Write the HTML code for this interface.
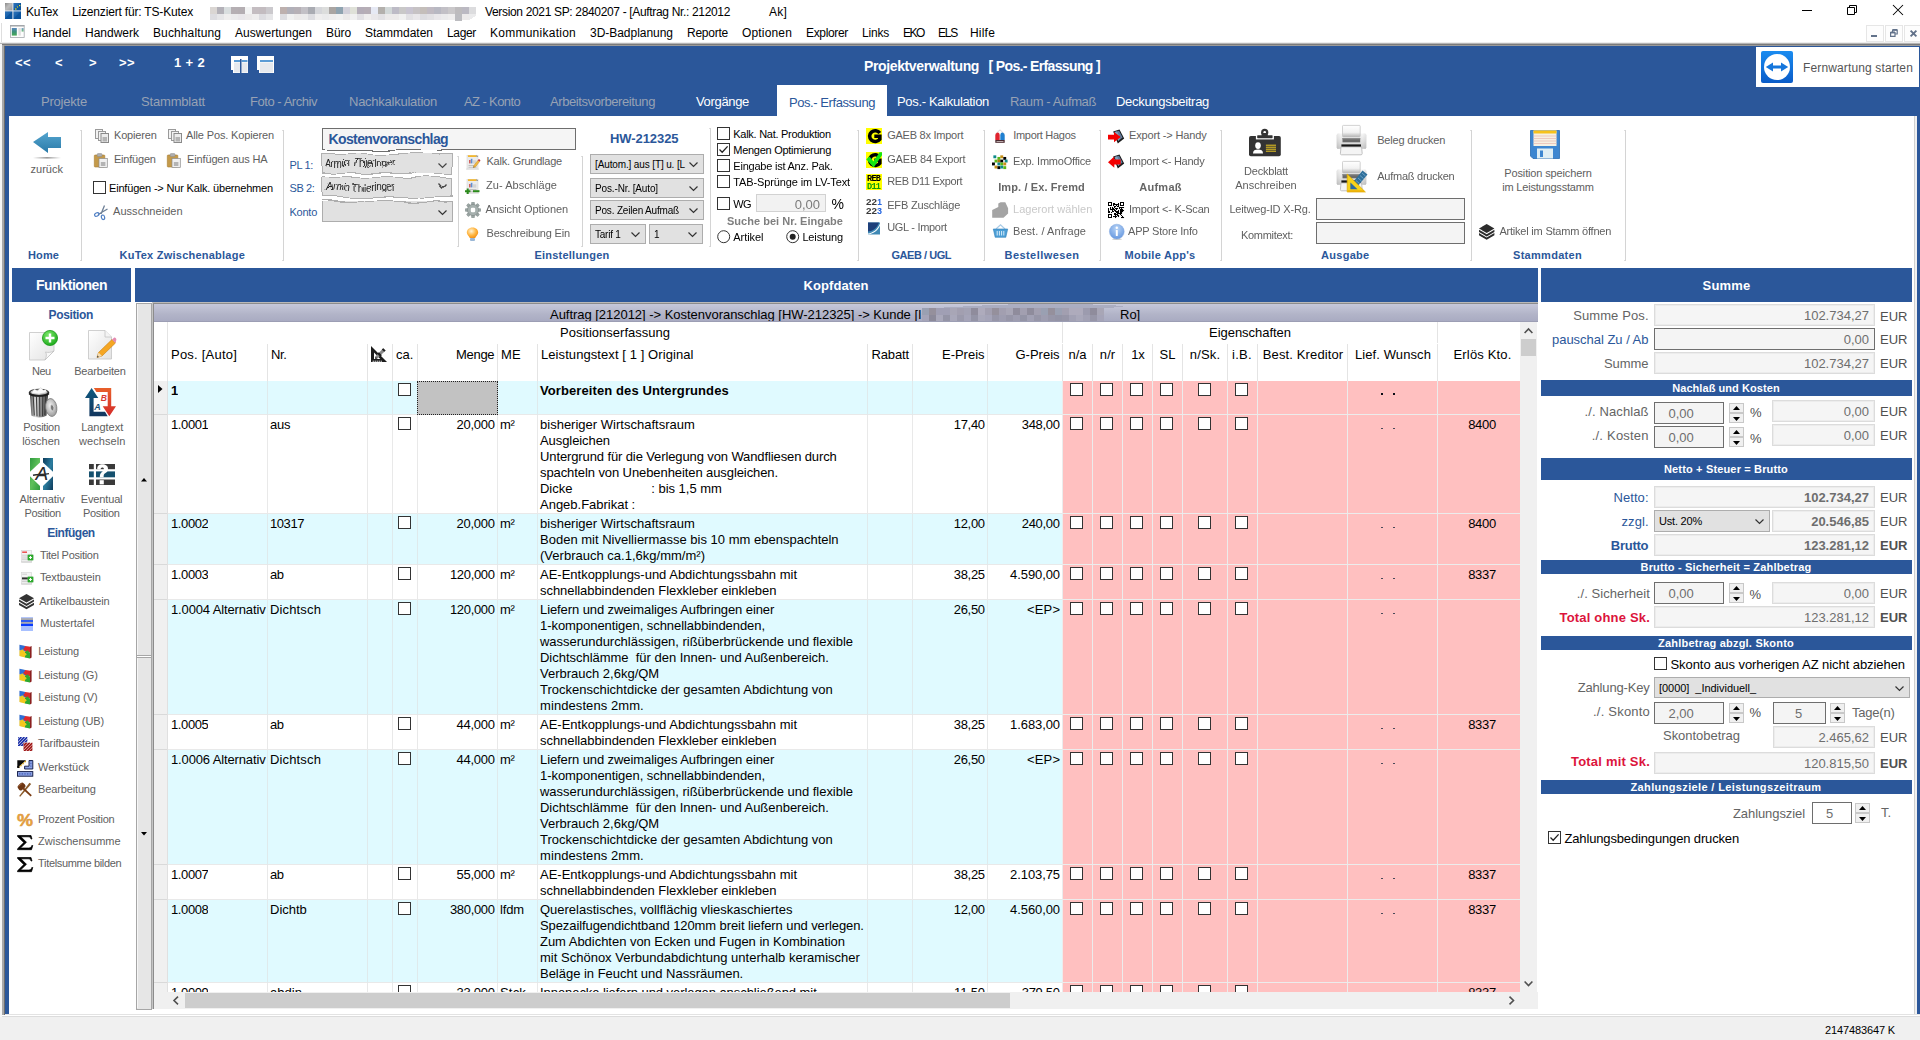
<!DOCTYPE html>
<html><head><meta charset="utf-8"><title>KuTex</title><style>
html,body{margin:0;padding:0;}
body{width:1920px;height:1040px;position:relative;overflow:hidden;background:#fff;
 font-family:"Liberation Sans",sans-serif;}
.t{position:absolute;white-space:nowrap;}
.b{position:absolute;}
svg{overflow:visible}
</style></head><body>
<div class="b" style="left:0px;top:0px;width:1920px;height:1040px;background:#fff;"></div>
<div class="b" style="left:0px;top:1017px;width:1920px;height:23px;background:#f0f0f0;"></div>
<div class="b" style="left:0px;top:1014px;width:1920px;height:1px;background:#e3e3e3;"></div>
<div class="b" style="left:0px;top:1016px;width:1920px;height:1px;background:#dcdcdc;"></div>
<div class="t" style="top:1022.5px;height:15px;line-height:15px;font-size:11px;color:#000;letter-spacing:-0.131px;left:1825px;">2147483647 K</div>
<div class="b" style="left:0px;top:44px;width:2px;height:973px;background:#f6f6f6;"></div>
<div class="b" style="left:2px;top:44px;width:2px;height:971px;background:#a9a9a9;"></div>
<div class="b" style="left:4px;top:44px;width:1px;height:971px;background:#6d6d6d;"></div>
<div class="b" style="left:0px;top:42px;width:1920px;height:1px;background:#ededed;"></div>
<div class="b" style="left:0px;top:43px;width:1920px;height:1px;background:#b4b4b4;"></div>
<div class="b" style="left:2px;top:44px;width:1918px;height:1px;background:#7a7a7a;"></div>
<div class="b" style="left:4px;top:45px;width:1916px;height:1px;background:#9a9a9a;"></div>
<div class="b" style="left:5px;top:46px;width:1915px;height:70px;background:#2b579a;"></div>
<div class="b" style="left:5px;top:116px;width:4px;height:898px;background:#2b579a;"></div>
<div class="b" style="left:1917px;top:116px;width:3px;height:898px;background:#2b579a;"></div>
<div class="b" style="left:1914px;top:116px;width:1px;height:898px;background:#d0d0d0;"></div>
<div class="b" style="left:1915px;top:116px;width:2px;height:898px;background:#f0f0f0;"></div>
<svg class="b" style="left:5px;top:3px" width="16" height="16" viewBox="0 0 16 16"><defs><linearGradient id="ai1" x1="0" y1="0" x2="1" y2="1"><stop offset="0" stop-color="#8a8a8a"/><stop offset="0.45" stop-color="#bcbcbc"/><stop offset="1" stop-color="#9a9a9a"/></linearGradient><linearGradient id="ai2" x1="0" y1="0" x2="1" y2="1"><stop offset="0" stop-color="#2f74b8"/><stop offset="0.45" stop-color="#1a62ac"/><stop offset="0.5" stop-color="#0a55a0"/><stop offset="1" stop-color="#0a4f98"/></linearGradient></defs><rect x="0" y="0" width="16" height="16" fill="#dfe6ee"/><rect x="0" y="0" width="7.4" height="7.4" fill="url(#ai1)"/><rect x="8.4" y="0" width="7.6" height="7.4" fill="url(#ai2)"/><rect x="0" y="8.4" width="7.4" height="7.6" fill="url(#ai2)"/><rect x="8.4" y="8.4" width="7.6" height="7.6" fill="url(#ai2)"/><rect x="14" y="1.9" width="1.3" height="1.3" fill="#f4e61e"/><rect x="11.9" y="3.4" width="1.2" height="1.2" fill="#d8d428"/><rect x="10.2" y="5.2" width="1.2" height="1.6" fill="#e6de1e"/></svg>
<div class="t" style="top:3.5px;height:16px;line-height:16px;font-size:12px;color:#000;letter-spacing:-0.270px;left:26px;">KuTex</div>
<div class="t" style="top:3.5px;height:16px;line-height:16px;font-size:12px;color:#000;letter-spacing:-0.174px;left:72px;">Lizenziert für: TS-Kutex</div>
<svg class="b" style="left:0;top:0" width="480" height="22" shape-rendering="crispEdges"><rect x="210" y="7" width="7" height="7" fill="#dad6d3"/><rect x="210" y="14" width="7" height="6" fill="#dddde1"/><rect x="217" y="7" width="7" height="7" fill="#b3b1b8"/><rect x="217" y="14" width="7" height="6" fill="#e6e6e8"/><rect x="224" y="7" width="7" height="7" fill="#d9dedf"/><rect x="224" y="14" width="7" height="6" fill="#efeeee"/><rect x="231" y="7" width="7" height="7" fill="#b5afb3"/><rect x="231" y="14" width="7" height="6" fill="#ebebec"/><rect x="238" y="7" width="7" height="7" fill="#b4aeb2"/><rect x="238" y="14" width="7" height="6" fill="#e9e7ea"/><rect x="245" y="7" width="7" height="7" fill="#f3f4f4"/><rect x="245" y="14" width="7" height="6" fill="#eceaea"/><rect x="252" y="7" width="7" height="7" fill="#c4bdc1"/><rect x="252" y="14" width="7" height="6" fill="#efeeee"/><rect x="259" y="7" width="7" height="7" fill="#c3bcc0"/><rect x="259" y="14" width="7" height="6" fill="#dddde1"/><rect x="266" y="7" width="7" height="7" fill="#cbc9cd"/><rect x="266" y="14" width="7" height="6" fill="#e6e6e8"/><rect x="280" y="7" width="7" height="7" fill="#bdb0ae"/><rect x="280" y="14" width="7" height="6" fill="#dddde1"/><rect x="287" y="7" width="7" height="7" fill="#b1b0b9"/><rect x="287" y="14" width="7" height="6" fill="#f1f1f1"/><rect x="294" y="7" width="7" height="7" fill="#b6b0b6"/><rect x="294" y="14" width="7" height="6" fill="#eceaea"/><rect x="301" y="7" width="7" height="7" fill="#c2c0c6"/><rect x="301" y="14" width="7" height="6" fill="#ebebec"/><rect x="308" y="7" width="7" height="7" fill="#a9abb2"/><rect x="308" y="14" width="7" height="6" fill="#dddde1"/><rect x="315" y="7" width="7" height="7" fill="#d5d6da"/><rect x="315" y="14" width="7" height="6" fill="#efeeee"/><rect x="322" y="7" width="7" height="7" fill="#dcdddc"/><rect x="322" y="14" width="7" height="6" fill="#ebebec"/><rect x="329" y="7" width="7" height="7" fill="#aaa5a2"/><rect x="329" y="14" width="7" height="6" fill="#efeeee"/><rect x="336" y="7" width="7" height="7" fill="#8fa3b0"/><rect x="336" y="14" width="7" height="6" fill="#f1f1f1"/><rect x="343" y="7" width="7" height="7" fill="#d3d1da"/><rect x="343" y="14" width="7" height="6" fill="#eceaea"/><rect x="350" y="7" width="7" height="7" fill="#dfe1d8"/><rect x="350" y="14" width="7" height="6" fill="#f1f1f1"/><rect x="357" y="7" width="7" height="7" fill="#b4adb8"/><rect x="357" y="14" width="7" height="6" fill="#e2e1e4"/><rect x="364" y="7" width="7" height="7" fill="#b6aeb6"/><rect x="364" y="14" width="7" height="6" fill="#efeeee"/><rect x="371" y="7" width="7" height="7" fill="#e6e9f4"/><rect x="371" y="14" width="7" height="6" fill="#e9e7ea"/><rect x="378" y="7" width="7" height="7" fill="#b3b0ac"/><rect x="378" y="14" width="7" height="6" fill="#e2e1e4"/><rect x="385" y="7" width="7" height="7" fill="#d2d8d8"/><rect x="385" y="14" width="7" height="6" fill="#eceaea"/><rect x="392" y="7" width="7" height="7" fill="#bdbbc6"/><rect x="392" y="14" width="7" height="6" fill="#eceaea"/><rect x="399" y="7" width="7" height="7" fill="#c9c8c8"/><rect x="399" y="14" width="7" height="6" fill="#f1f1f1"/><rect x="406" y="7" width="7" height="7" fill="#c8c4d0"/><rect x="406" y="14" width="7" height="6" fill="#e2e1e4"/><rect x="413" y="7" width="7" height="7" fill="#c6c2c4"/><rect x="413" y="14" width="7" height="6" fill="#e9e7ea"/><rect x="420" y="7" width="7" height="7" fill="#c4beba"/><rect x="420" y="14" width="7" height="6" fill="#dddde1"/><rect x="427" y="7" width="7" height="7" fill="#c0bac2"/><rect x="427" y="14" width="7" height="6" fill="#e2e1e4"/><rect x="434" y="7" width="7" height="7" fill="#b8b8c2"/><rect x="434" y="14" width="7" height="6" fill="#e9e7ea"/><rect x="441" y="7" width="7" height="7" fill="#c2c0c6"/><rect x="441" y="14" width="7" height="6" fill="#ebebec"/><rect x="448" y="7" width="7" height="7" fill="#cac8ca"/><rect x="448" y="14" width="7" height="6" fill="#efeeee"/><rect x="455" y="7" width="7" height="7" fill="#bdbbbd"/><rect x="455" y="14" width="7" height="6" fill="#ebebec"/><rect x="462" y="7" width="7" height="7" fill="#bbb9c2"/><rect x="462" y="14" width="7" height="6" fill="#eceaea"/><rect x="469" y="7" width="7" height="7" fill="#dcdcde"/><rect x="469" y="14" width="7" height="6" fill="#ebebec"/><rect x="455" y="14" width="7" height="7" fill="#bcbcc0"/><path d="M469 20 L476 16 V21 H469 Z" fill="#fff"/></svg>
<div class="t" style="top:3.5px;height:16px;line-height:16px;font-size:12px;color:#000;letter-spacing:-0.337px;left:485px;">Version 2021 SP: 2840207 - [Auftrag Nr.: 212012</div>
<div class="t" style="top:3.5px;height:16px;line-height:16px;font-size:12px;color:#000;letter-spacing:0.221px;left:769px;">Ak]</div>
<svg class="b" style="left:1802px;top:10px" width="10" height="1" viewBox="0 0 10 1"><rect width="10" height="1" fill="#000"/></svg>
<svg class="b" style="left:1847px;top:5px" width="10" height="10" viewBox="0 0 10 10"><path d="M0.5 2.5 H7.5 V9.5 H0.5 Z M2.5 2.5 V0.5 H9.5 V7.5 H7.5" fill="none" stroke="#000" stroke-width="1"/></svg>
<svg class="b" style="left:1893px;top:5px" width="10" height="10" viewBox="0 0 10 10"><path d="M0 0 L10 10 M10 0 L0 10" stroke="#000" stroke-width="1.05"/></svg>
<div class="b" style="left:0px;top:22px;width:1920px;height:20px;background:#fff;"></div>
<svg class="b" style="left:10.3px;top:25.2px" width="14.6" height="12.8" viewBox="0 0 14.6 12.8"><defs><linearGradient id="mi1" x1="0" y1="0" x2="0" y2="1"><stop offset="0" stop-color="#5a86c0"/><stop offset="0.5" stop-color="#3a9078"/><stop offset="1" stop-color="#48aa58"/></linearGradient></defs><rect x="0.4" y="0.4" width="13.8" height="12" fill="#fdfdfd" stroke="#a4a8ac" stroke-width="0.8"/><rect x="0.4" y="0.2" width="13.8" height="1.3" fill="#9ea2a6"/><rect x="1.8" y="3" width="5" height="7.6" fill="url(#mi1)"/><rect x="8.4" y="3" width="2.4" height="7.6" fill="#dedede"/><rect x="11.6" y="3" width="2" height="3.6" fill="url(#mi1)" opacity="0.75"/></svg>
<div class="b" style="left:1px;top:23px;width:1px;height:19px;background:#dedede;"></div>
<div class="t" style="top:25.0px;height:16px;line-height:16px;font-size:12px;color:#000;letter-spacing:-0.005px;left:33px;">Handel</div>
<div class="t" style="top:25.0px;height:16px;line-height:16px;font-size:12px;color:#000;letter-spacing:-0.003px;left:85px;">Handwerk</div>
<div class="t" style="top:25.0px;height:16px;line-height:16px;font-size:12px;color:#000;letter-spacing:0.116px;left:153px;">Buchhaltung</div>
<div class="t" style="top:25.0px;height:16px;line-height:16px;font-size:12px;color:#000;letter-spacing:0.023px;left:235px;">Auswertungen</div>
<div class="t" style="top:25.0px;height:16px;line-height:16px;font-size:12px;color:#000;letter-spacing:-0.087px;left:326px;">Büro</div>
<div class="t" style="top:25.0px;height:16px;line-height:16px;font-size:12px;color:#000;letter-spacing:-0.004px;left:365px;">Stammdaten</div>
<div class="t" style="top:25.0px;height:16px;line-height:16px;font-size:12px;color:#000;letter-spacing:-0.339px;left:447px;">Lager</div>
<div class="t" style="top:25.0px;height:16px;line-height:16px;font-size:12px;color:#000;letter-spacing:0.253px;left:490px;">Kommunikation</div>
<div class="t" style="top:25.0px;height:16px;line-height:16px;font-size:12px;color:#000;letter-spacing:-0.031px;left:590px;">3D-Badplanung</div>
<div class="t" style="top:25.0px;height:16px;line-height:16px;font-size:12px;color:#000;letter-spacing:-0.242px;left:687px;">Reporte</div>
<div class="t" style="top:25.0px;height:16px;line-height:16px;font-size:12px;color:#000;letter-spacing:0.162px;left:742px;">Optionen</div>
<div class="t" style="top:25.0px;height:16px;line-height:16px;font-size:12px;color:#000;letter-spacing:-0.336px;left:806px;">Explorer</div>
<div class="t" style="top:25.0px;height:16px;line-height:16px;font-size:12px;color:#000;letter-spacing:-0.203px;left:862px;">Links</div>
<div class="t" style="top:25.0px;height:16px;line-height:16px;font-size:12px;color:#000;letter-spacing:-1.448px;left:903px;">EKO</div>
<div class="t" style="top:25.0px;height:16px;line-height:16px;font-size:12px;color:#000;letter-spacing:-1.228px;left:938px;">ELS</div>
<div class="t" style="top:25.0px;height:16px;line-height:16px;font-size:12px;color:#000;letter-spacing:0.199px;left:970px;">Hilfe</div>
<div class="b" style="left:1866px;top:24.5px;width:17.5px;height:17.5px;background:#fdfdfd;border:1px solid #e6e6e6;box-sizing:border-box;"></div>
<div class="b" style="left:1885px;top:24.5px;width:17.5px;height:17.5px;background:#fdfdfd;border:1px solid #e6e6e6;box-sizing:border-box;"></div>
<div class="b" style="left:1904px;top:24.5px;width:17.5px;height:17.5px;background:#fdfdfd;border:1px solid #e6e6e6;box-sizing:border-box;"></div>
<svg class="b" style="left:1871px;top:35px" width="6" height="2" viewBox="0 0 6 2"><rect width="6" height="2" fill="#62728a"/></svg>
<svg class="b" style="left:1890px;top:29px" width="8" height="8" viewBox="0 0 8 8"><path d="M0.6 3.6 H5 V7.4 H0.6 Z M2.6 3 V1 H7.2 V5 H5.4" fill="none" stroke="#62728a" stroke-width="1.2"/><path d="M0.6 3.3 H5 M2.6 0.9 H7.2" stroke="#62728a" stroke-width="1.7"/></svg>
<svg class="b" style="left:1909.5px;top:30px" width="7" height="7" viewBox="0 0 7 7"><path d="M0.6 0.6 L6.4 6.4 M6.4 0.6 L0.6 6.4" stroke="#62728a" stroke-width="1.9"/></svg>
<div class="t" style="top:53.5px;height:17px;line-height:17px;font-size:13px;color:#fff;font-weight:bold;letter-spacing:0.408px;left:15px;">&lt;&lt;</div>
<div class="t" style="top:53.5px;height:17px;line-height:17px;font-size:13px;color:#fff;font-weight:bold;letter-spacing:0.408px;left:55px;">&lt;</div>
<div class="t" style="top:53.5px;height:17px;line-height:17px;font-size:13px;color:#fff;font-weight:bold;letter-spacing:0.408px;left:89px;">&gt;</div>
<div class="t" style="top:53.5px;height:17px;line-height:17px;font-size:13px;color:#fff;font-weight:bold;letter-spacing:0.408px;left:119px;">&gt;&gt;</div>
<div class="t" style="top:53.5px;height:17px;line-height:17px;font-size:13px;color:#fff;font-weight:bold;letter-spacing:0.345px;left:174px;">1 + 2</div>
<svg class="b" style="left:231px;top:56px" width="17" height="17" viewBox="0 0 17 17"><rect x="0" y="0" width="17" height="14" fill="#fff"/><rect x="2" y="3" width="15" height="14" fill="#fff"/><rect x="3" y="4" width="6" height="2" fill="#5b9bd5"/><rect x="10.5" y="4" width="6" height="2" fill="#5b9bd5"/><rect x="3" y="6.5" width="6" height="10" fill="#e6e9ee"/><rect x="10.5" y="6.5" width="6" height="10" fill="#e6e9ee"/><rect x="9" y="3" width="1.5" height="14" fill="#2b579a"/></svg>
<svg class="b" style="left:257px;top:56px" width="17" height="17" viewBox="0 0 17 17"><rect x="0" y="0" width="17" height="14" fill="#fff"/><rect x="2" y="3" width="15" height="14" fill="#fff"/><rect x="3" y="4" width="13" height="2" fill="#5b9bd5"/><rect x="3" y="6.5" width="13" height="10" fill="#e6e9ee"/></svg>
<div class="t" style="top:57.0px;height:18px;line-height:18px;font-size:14px;color:#fff;font-weight:bold;letter-spacing:-0.375px;left:864px;">Projektverwaltung</div>
<div class="t" style="top:57.0px;height:18px;line-height:18px;font-size:14px;color:#fff;font-weight:bold;letter-spacing:-0.641px;left:988.5px;">[ Pos.- Erfassung ]</div>
<div class="b" style="left:1756px;top:47px;width:163px;height:40px;background:#fff;"></div>
<svg class="b" style="left:1761px;top:51px" width="32" height="32" viewBox="0 0 32 32"><defs><linearGradient id="tv" x1="0" y1="0" x2="0" y2="1"><stop offset="0" stop-color="#1a8cf0"/><stop offset="1" stop-color="#0a5cc8"/></linearGradient></defs><rect width="32" height="32" rx="2" fill="url(#tv)"/><circle cx="16" cy="16" r="13" fill="#fff"/><path d="M4.8 16 L12 11.5 V14.6 H20 V11.5 L27.2 16 L20 20.5 V17.4 H12 V20.5 Z" fill="#1576dc"/></svg>
<div class="t" style="top:60.0px;height:16px;line-height:16px;font-size:12px;color:#555;letter-spacing:0.137px;left:1803px;">Fernwartung starten</div>
<div class="t" style="top:93.0px;height:17px;line-height:17px;font-size:13px;color:#97a2b4;letter-spacing:-0.211px;left:41px;">Projekte</div>
<div class="t" style="top:93.0px;height:17px;line-height:17px;font-size:13px;color:#97a2b4;letter-spacing:-0.174px;left:141px;">Stammblatt</div>
<div class="t" style="top:93.0px;height:17px;line-height:17px;font-size:13px;color:#97a2b4;letter-spacing:-0.459px;left:250px;">Foto - Archiv</div>
<div class="t" style="top:93.0px;height:17px;line-height:17px;font-size:13px;color:#97a2b4;letter-spacing:-0.252px;left:349px;">Nachkalkulation</div>
<div class="t" style="top:93.0px;height:17px;line-height:17px;font-size:13px;color:#97a2b4;letter-spacing:-0.614px;left:464px;">AZ - Konto</div>
<div class="t" style="top:93.0px;height:17px;line-height:17px;font-size:13px;color:#97a2b4;letter-spacing:-0.407px;left:550px;">Arbeitsvorbereitung</div>
<div class="t" style="top:93.0px;height:17px;line-height:17px;font-size:13px;color:#fff;letter-spacing:-0.333px;left:696px;">Vorgänge</div>
<div class="b" style="left:777px;top:85px;width:110px;height:31px;background:#fff;"></div>
<div class="t" style="top:93.5px;height:17px;line-height:17px;font-size:13px;color:#2b579a;letter-spacing:-0.433px;left:789px;">Pos.- Erfassung</div>
<div class="t" style="top:93.0px;height:17px;line-height:17px;font-size:13px;color:#fff;letter-spacing:-0.327px;left:897px;">Pos.- Kalkulation</div>
<div class="t" style="top:93.0px;height:17px;line-height:17px;font-size:13px;color:#97a2b4;letter-spacing:-0.387px;left:1010px;">Raum - Aufmaß</div>
<div class="t" style="top:93.0px;height:17px;line-height:17px;font-size:13px;color:#fff;letter-spacing:-0.304px;left:1116px;">Deckungsbeitrag</div>
<div class="b" style="left:9px;top:116px;width:1905px;height:152px;background:#fff;"></div>
<div class="b" style="left:81px;top:130px;width:1px;height:131px;background:#d4d4d4;"></div>
<div class="b" style="left:80px;top:130px;width:1px;height:1px;background:#dedede;"></div>
<div class="b" style="left:80px;top:260px;width:1px;height:1px;background:#dedede;"></div>
<div class="b" style="left:283px;top:130px;width:1px;height:131px;background:#d4d4d4;"></div>
<div class="b" style="left:282px;top:130px;width:1px;height:1px;background:#dedede;"></div>
<div class="b" style="left:282px;top:260px;width:1px;height:1px;background:#dedede;"></div>
<div class="b" style="left:858px;top:130px;width:1px;height:131px;background:#d4d4d4;"></div>
<div class="b" style="left:857px;top:130px;width:1px;height:1px;background:#dedede;"></div>
<div class="b" style="left:857px;top:260px;width:1px;height:1px;background:#dedede;"></div>
<div class="b" style="left:984px;top:130px;width:1px;height:131px;background:#d4d4d4;"></div>
<div class="b" style="left:983px;top:130px;width:1px;height:1px;background:#dedede;"></div>
<div class="b" style="left:983px;top:260px;width:1px;height:1px;background:#dedede;"></div>
<div class="b" style="left:1100px;top:130px;width:1px;height:131px;background:#d4d4d4;"></div>
<div class="b" style="left:1099px;top:130px;width:1px;height:1px;background:#dedede;"></div>
<div class="b" style="left:1099px;top:260px;width:1px;height:1px;background:#dedede;"></div>
<div class="b" style="left:1221px;top:130px;width:1px;height:131px;background:#d4d4d4;"></div>
<div class="b" style="left:1220px;top:130px;width:1px;height:1px;background:#dedede;"></div>
<div class="b" style="left:1220px;top:260px;width:1px;height:1px;background:#dedede;"></div>
<div class="b" style="left:1471px;top:130px;width:1px;height:131px;background:#d4d4d4;"></div>
<div class="b" style="left:1470px;top:130px;width:1px;height:1px;background:#dedede;"></div>
<div class="b" style="left:1470px;top:260px;width:1px;height:1px;background:#dedede;"></div>
<div class="b" style="left:1625px;top:130px;width:1px;height:131px;background:#d4d4d4;"></div>
<div class="b" style="left:1624px;top:130px;width:1px;height:1px;background:#dedede;"></div>
<div class="b" style="left:1624px;top:260px;width:1px;height:1px;background:#dedede;"></div>
<div class="b" style="left:458px;top:156px;width:1px;height:91px;background:#d4d4d4;"></div>
<div class="b" style="left:457px;top:156px;width:1px;height:1px;background:#dedede;"></div>
<div class="b" style="left:457px;top:246px;width:1px;height:1px;background:#dedede;"></div>
<div class="b" style="left:582px;top:156px;width:1px;height:91px;background:#d4d4d4;"></div>
<div class="b" style="left:581px;top:156px;width:1px;height:1px;background:#dedede;"></div>
<div class="b" style="left:581px;top:246px;width:1px;height:1px;background:#dedede;"></div>
<div class="b" style="left:710px;top:128px;width:1px;height:119px;background:#d4d4d4;"></div>
<div class="b" style="left:709px;top:128px;width:1px;height:1px;background:#dedede;"></div>
<div class="b" style="left:709px;top:246px;width:1px;height:1px;background:#dedede;"></div>
<div class="t" style="top:247.8px;height:15px;line-height:15px;font-size:11px;color:#2b579a;font-weight:bold;letter-spacing:0.110px;left:28px;">Home</div>
<div class="t" style="top:247.8px;height:15px;line-height:15px;font-size:11px;color:#2b579a;font-weight:bold;letter-spacing:0.233px;left:119.5px;">KuTex Zwischenablage</div>
<div class="t" style="top:247.8px;height:15px;line-height:15px;font-size:11px;color:#2b579a;font-weight:bold;letter-spacing:0.222px;left:534.5px;">Einstellungen</div>
<div class="t" style="top:247.8px;height:15px;line-height:15px;font-size:11px;color:#2b579a;font-weight:bold;letter-spacing:-0.467px;left:891.5px;">GAEB / UGL</div>
<div class="t" style="top:247.8px;height:15px;line-height:15px;font-size:11px;color:#2b579a;font-weight:bold;letter-spacing:0.441px;left:1004.5px;">Bestellwesen</div>
<div class="t" style="top:247.8px;height:15px;line-height:15px;font-size:11px;color:#2b579a;font-weight:bold;letter-spacing:0.284px;left:1124.5px;">Mobile App&#x27;s</div>
<div class="t" style="top:247.8px;height:15px;line-height:15px;font-size:11px;color:#2b579a;font-weight:bold;letter-spacing:0.292px;left:1321px;">Ausgabe</div>
<div class="t" style="top:247.8px;height:15px;line-height:15px;font-size:11px;color:#2b579a;font-weight:bold;letter-spacing:0.298px;left:1513px;">Stammdaten</div>
<svg class="b" style="left:33px;top:132px" width="28" height="27" viewBox="0 0 28 27"><defs><linearGradient id="ar" x1="0" y1="0" x2="0" y2="1"><stop offset="0" stop-color="#55a5cf"/><stop offset="1" stop-color="#2a7aa8"/></linearGradient><linearGradient id="sh" x1="0" y1="0" x2="1" y2="0"><stop offset="0" stop-color="#fff"/><stop offset="0.5" stop-color="#9a9a9a"/><stop offset="1" stop-color="#fff"/></linearGradient></defs><path d="M0 10 L15 0 V5 H28 V16 H15 V21 Z" fill="url(#ar)"/><rect x="0" y="25" width="28" height="1.6" fill="url(#sh)"/></svg>
<div class="t" style="top:161.8px;height:15px;line-height:15px;font-size:11px;color:#606060;letter-spacing:0.017px;left:30.5px;">zurück</div>
<svg class="b" style="left:95px;top:129px" width="14" height="14" viewBox="0 0 14 14"><rect x="0.5" y="0.5" width="7" height="9" fill="#f2f2f2" stroke="#9a9a9a"/><rect x="3.5" y="2.5" width="7" height="9" fill="#f2f2f2" stroke="#9a9a9a"/><rect x="6" y="4.5" width="7.5" height="9" fill="#ececec" stroke="#8a8a8a"/><rect x="7.5" y="8" width="4.5" height="4.5" fill="#b4b4b4"/></svg>
<div class="t" style="top:127.7px;height:15px;line-height:15px;font-size:11px;color:#606060;letter-spacing:-0.167px;left:114px;">Kopieren</div>
<svg class="b" style="left:168px;top:129px" width="14" height="14" viewBox="0 0 14 14"><rect x="0.5" y="0.5" width="7" height="9" fill="#f2f2f2" stroke="#9a9a9a"/><rect x="3.5" y="2.5" width="7" height="9" fill="#f2f2f2" stroke="#9a9a9a"/><rect x="6" y="4.5" width="7.5" height="9" fill="#ececec" stroke="#8a8a8a"/><rect x="7.5" y="8" width="4.5" height="4.5" fill="#b4b4b4"/></svg>
<div class="t" style="top:127.7px;height:15px;line-height:15px;font-size:11px;color:#606060;letter-spacing:-0.139px;left:186px;">Alle Pos. Kopieren</div>
<svg class="b" style="left:94px;top:153px" width="14" height="15" viewBox="0 0 14 15"><rect x="0.3" y="2" width="10.5" height="12" rx="0.8" fill="#c49a4a" stroke="#a87c30" stroke-width="0.6"/><rect x="3.2" y="0.6" width="4.8" height="3" rx="0.8" fill="#b0b0b0" stroke="#8a8a8a" stroke-width="0.5"/><rect x="5" y="5.5" width="8.3" height="9" fill="#f0f0f0" stroke="#8a8a8a" stroke-width="0.7"/><rect x="6.8" y="9" width="4.6" height="4" fill="#b4b4b4"/></svg>
<div class="t" style="top:151.9px;height:15px;line-height:15px;font-size:11px;color:#606060;letter-spacing:-0.216px;left:114px;">Einfügen</div>
<svg class="b" style="left:167px;top:153px" width="14" height="15" viewBox="0 0 14 15"><rect x="0.3" y="2" width="10.5" height="12" rx="0.8" fill="#c49a4a" stroke="#a87c30" stroke-width="0.6"/><rect x="3.2" y="0.6" width="4.8" height="3" rx="0.8" fill="#b0b0b0" stroke="#8a8a8a" stroke-width="0.5"/><rect x="5" y="5.5" width="8.3" height="9" fill="#f0f0f0" stroke="#8a8a8a" stroke-width="0.7"/><rect x="6.8" y="9" width="4.6" height="4" fill="#b4b4b4"/></svg>
<div class="t" style="top:151.9px;height:15px;line-height:15px;font-size:11px;color:#606060;letter-spacing:-0.137px;left:187px;">Einfügen aus HA</div>
<div class="b" style="left:93px;top:181px;width:13px;height:13px;background:#fff;border:1px solid #333;box-sizing:border-box;"></div>
<div class="t" style="top:180.8px;height:15px;line-height:15px;font-size:11px;color:#000;letter-spacing:-0.178px;left:109px;">Einfügen -&gt; Nur Kalk. übernehmen</div>
<svg class="b" style="left:94px;top:205px" width="14" height="15" viewBox="0 0 14 15"><path d="M10.5 0.5 L7 9 M13.5 4 L4 9.5" stroke="#6d7f96" stroke-width="1.3" fill="none"/><ellipse cx="2.8" cy="9.5" rx="2.3" ry="1.6" fill="none" stroke="#4f7fc4" stroke-width="1.2" transform="rotate(-25 2.8 9.5)"/><ellipse cx="9" cy="12.3" rx="1.6" ry="2.3" fill="none" stroke="#4f7fc4" stroke-width="1.2" transform="rotate(-15 9 12.3)"/></svg>
<div class="t" style="top:203.8px;height:15px;line-height:15px;font-size:11px;color:#606060;letter-spacing:0.049px;left:113px;">Ausschneiden</div>
<div class="b" style="left:322px;top:128px;width:254px;height:22px;background:#f5f5f5;border:1px solid #6e6e6e;box-sizing:border-box;"></div>
<div class="t" style="top:130.3px;height:18px;line-height:18px;font-size:14px;color:#2b579a;font-weight:bold;letter-spacing:-0.613px;left:328.5px;">Kostenvoranschlag</div>
<div class="t" style="top:129.9px;height:17px;line-height:17px;font-size:13px;color:#2b579a;font-weight:bold;letter-spacing:-0.068px;left:610px;">HW-212325</div>
<div class="t" style="top:157.5px;height:15px;line-height:15px;font-size:11px;color:#2b579a;letter-spacing:-0.355px;left:289.5px;">PL 1:</div>
<div class="t" style="top:181.0px;height:15px;line-height:15px;font-size:11px;color:#2b579a;letter-spacing:-0.381px;left:289.5px;">SB 2:</div>
<div class="t" style="top:205.0px;height:15px;line-height:15px;font-size:11px;color:#2b579a;letter-spacing:-0.249px;left:289.5px;">Konto</div>
<svg class="b" style="left:0;top:0" width="0" height="0"><defs><filter id="wob" x="-5%" y="-30%" width="110%" height="160%"><feTurbulence type="fractalNoise" baseFrequency="0.035 0.07" numOctaves="2" seed="3" result="n"/><feDisplacementMap in="SourceGraphic" in2="n" scale="7" xChannelSelector="R" yChannelSelector="G" result="d"/><feGaussianBlur in="d" stdDeviation="0.35"/></filter></defs></svg>
<div class="b" style="left:322px;top:201px;width:131px;height:21px;background:#e1e1e1;border:1px solid #adadad;box-sizing:border-box;"></div>
<svg class="b" style="left:438px;top:209.5px" width="9" height="5" viewBox="0 0 9 5"><path d="M0.5 0.5 L4.5 4.5 L8.5 0.5" fill="none" stroke="#333" stroke-width="1.2"/></svg>
<div class="b" style="left:323px;top:201px;width:129px;height:1px;background:#e1e1e1;"></div>
<div class="b" style="left:323px;top:149px;width:132px;height:1px;background:#f5f5f5;"></div>
<div class="b" style="left:316px;top:144px;width:144px;height:64px;filter:url(#wob)"><div class="b" style="left:7px;top:5px;width:132px;height:1px;background:#6e6e6e"></div><div class="b" style="left:6px;top:9px;width:131px;height:21px;background:#e1e1e1;border:1px solid #b0b0b0;box-sizing:border-box"></div><div class="t" style="left:10px;top:12px;font-size:10px;line-height:15px;color:#222;letter-spacing:-0.3px">Armin <i>T</i>hieringer</div><svg class="b" style="left:123px;top:17px" width="9" height="5"><path d="M0.5 0.5 L4.5 4.5 L8.5 0.5" fill="none" stroke="#444" stroke-width="1.2"/></svg><div class="b" style="left:6px;top:33px;width:131px;height:21px;background:#e1e1e1;border:1px solid #b0b0b0;box-sizing:border-box"></div><div class="t" style="left:10px;top:36px;font-size:10px;line-height:15px;color:#222;letter-spacing:-0.3px"><i>Armin</i> Thieringer</div><svg class="b" style="left:123px;top:40px" width="9" height="6"><path d="M0.5 0.5 L4.5 5 L8.5 0.5" fill="none" stroke="#444" stroke-width="1.3"/></svg><div class="b" style="left:6px;top:57px;width:131px;height:1px;background:#adadad"></div></div>
<svg class="b" style="left:465px;top:153.5px" width="16" height="16" viewBox="0 0 16 16"><rect x="2" y="1.5" width="11" height="13.5" fill="#ececec" stroke="#d6d6d6" stroke-width="0.6"/><rect x="1" y="14.6" width="13" height="1" fill="#dcdcdc"/><rect x="3" y="1.2" width="8.5" height="1.8" fill="#f2b731"/><path d="M11.5 0.8 L13.2 3 H11.5 Z" fill="#8a8a8a"/><rect x="4" y="6" width="1.6" height="3.4" fill="#d0605d"/><rect x="5.8" y="4.8" width="1.6" height="4.6" fill="#5f8fd0"/><rect x="7.8" y="6.6" width="3.5" height="1" fill="#c4c4c4"/><rect x="7.8" y="8.4" width="3.5" height="1" fill="#c4c4c4"/><rect x="3.5" y="11" width="8" height="1" fill="#c0c0c0"/><rect x="3.5" y="12.8" width="8" height="1" fill="#c0c0c0"/><path d="M8.8 11.6 L13.2 6 L14.8 7.3 L10.5 12.9 L8.4 13.5 Z" fill="#f0b840" stroke="#c08020" stroke-width="0.4"/><path d="M13.4 5.6 L15 6.9" stroke="#c03040" stroke-width="1.7"/><path d="M8.4 13.5 L8.7 12.4 L9.5 13.1 Z" fill="#222"/></svg>
<div class="t" style="top:154.0px;height:15px;line-height:15px;font-size:11px;color:#606060;letter-spacing:-0.225px;left:486.5px;">Kalk. Grundlage</div>
<svg class="b" style="left:465px;top:177.5px" width="16" height="16" viewBox="0 0 16 16"><rect x="2" y="1.5" width="11" height="13.5" fill="#ececec" stroke="#d6d6d6" stroke-width="0.6"/><rect x="1" y="14.6" width="13" height="1" fill="#dcdcdc"/><rect x="3" y="1.2" width="8.5" height="1.8" fill="#f2b731"/><path d="M11.5 0.8 L13.2 3 H11.5 Z" fill="#8a8a8a"/><rect x="4" y="6" width="1.6" height="3.4" fill="#d0605d"/><rect x="5.8" y="4.8" width="1.6" height="4.6" fill="#5f8fd0"/><rect x="7.8" y="6.6" width="3.5" height="1" fill="#c4c4c4"/><rect x="7.8" y="8.4" width="3.5" height="1" fill="#c4c4c4"/><rect x="3.5" y="11" width="8" height="1" fill="#c0c0c0"/><rect x="3.5" y="12.8" width="8" height="1" fill="#c0c0c0"/><path d="M0 13.2 H5.4 M2.7 10.5 V15.9" stroke="#2a8a1a" stroke-width="2"/><path d="M8 13.2 H14.5" stroke="#2a8a1a" stroke-width="2"/></svg>
<div class="t" style="top:177.9px;height:15px;line-height:15px;font-size:11px;color:#606060;letter-spacing:0.052px;left:486px;">Zu- Abschläge</div>
<svg class="b" style="left:465px;top:202px" width="16" height="16" viewBox="0 0 16 16"><rect x="6.4" y="0" width="3.2" height="16" rx="0.8" transform="rotate(0 8 8)" fill="#9aa4a2"/><rect x="6.4" y="0" width="3.2" height="16" rx="0.8" transform="rotate(45 8 8)" fill="#9aa4a2"/><rect x="6.4" y="0" width="3.2" height="16" rx="0.8" transform="rotate(90 8 8)" fill="#9aa4a2"/><rect x="6.4" y="0" width="3.2" height="16" rx="0.8" transform="rotate(135 8 8)" fill="#9aa4a2"/><rect x="6.4" y="0" width="3.2" height="16" rx="0.8" transform="rotate(180 8 8)" fill="#9aa4a2"/><rect x="6.4" y="0" width="3.2" height="16" rx="0.8" transform="rotate(225 8 8)" fill="#9aa4a2"/><rect x="6.4" y="0" width="3.2" height="16" rx="0.8" transform="rotate(270 8 8)" fill="#9aa4a2"/><rect x="6.4" y="0" width="3.2" height="16" rx="0.8" transform="rotate(315 8 8)" fill="#9aa4a2"/><circle cx="8" cy="8" r="5.6" fill="#a6b0ae"/><rect x="5.8" y="5.8" width="4.4" height="4.4" rx="1.2" fill="#fff"/><circle cx="8" cy="8" r="5.6" fill="none" stroke="#7d8886" stroke-width="0.6"/></svg>
<div class="t" style="top:201.8px;height:15px;line-height:15px;font-size:11px;color:#606060;letter-spacing:-0.080px;left:485.5px;">Ansicht Optionen</div>
<svg class="b" style="left:466px;top:227px" width="13" height="15" viewBox="0 0 13 15"><defs><radialGradient id="bulb" cx="0.4" cy="0.35" r="0.7"><stop offset="0" stop-color="#fff4d8"/><stop offset="0.55" stop-color="#ffb845"/><stop offset="1" stop-color="#f28c10"/></radialGradient></defs><path d="M6.5 0.5 C2.8 0.5 0.8 3 0.8 5.6 C0.8 8 3.2 9.2 3.8 11 H9.2 C9.8 9.2 12.2 8 12.2 5.6 C12.2 3 10.2 0.5 6.5 0.5 Z" fill="url(#bulb)"/><rect x="4" y="11" width="5" height="3" rx="1" fill="#9ab7d6"/></svg>
<div class="t" style="top:225.5px;height:15px;line-height:15px;font-size:11px;color:#606060;letter-spacing:-0.170px;left:486.5px;">Beschreibung Ein</div>
<div class="b" style="left:590px;top:154px;width:114px;height:20px;background:#e1e1e1;border:1px solid #adadad;box-sizing:border-box;"></div>
<div class="t" style="top:157.5px;height:14px;line-height:14px;font-size:10px;color:#000;letter-spacing:-0.128px;left:595px;">[Autom.] aus [T] u. [L</div>
<svg class="b" style="left:689px;top:162.0px" width="9" height="5" viewBox="0 0 9 5"><path d="M0.5 0.5 L4.5 4.5 L8.5 0.5" fill="none" stroke="#333" stroke-width="1.2"/></svg>
<div class="b" style="left:590px;top:178px;width:114px;height:20px;background:#e1e1e1;border:1px solid #adadad;box-sizing:border-box;"></div>
<div class="t" style="top:181.5px;height:14px;line-height:14px;font-size:10px;color:#000;letter-spacing:-0.135px;left:595px;">Pos.-Nr. [Auto]</div>
<svg class="b" style="left:689px;top:186.0px" width="9" height="5" viewBox="0 0 9 5"><path d="M0.5 0.5 L4.5 4.5 L8.5 0.5" fill="none" stroke="#333" stroke-width="1.2"/></svg>
<div class="b" style="left:590px;top:200px;width:114px;height:20px;background:#e1e1e1;border:1px solid #adadad;box-sizing:border-box;"></div>
<div class="t" style="top:203.5px;height:14px;line-height:14px;font-size:10px;color:#000;letter-spacing:-0.181px;left:595px;">Pos. Zeilen Aufmaß</div>
<svg class="b" style="left:689px;top:208.0px" width="9" height="5" viewBox="0 0 9 5"><path d="M0.5 0.5 L4.5 4.5 L8.5 0.5" fill="none" stroke="#333" stroke-width="1.2"/></svg>
<div class="b" style="left:590px;top:224px;width:56px;height:20px;background:#e1e1e1;border:1px solid #adadad;box-sizing:border-box;"></div>
<div class="t" style="top:227.5px;height:14px;line-height:14px;font-size:10px;color:#000;letter-spacing:-0.247px;left:595px;">Tarif 1</div>
<svg class="b" style="left:631px;top:232.0px" width="9" height="5" viewBox="0 0 9 5"><path d="M0.5 0.5 L4.5 4.5 L8.5 0.5" fill="none" stroke="#333" stroke-width="1.2"/></svg>
<div class="b" style="left:649px;top:224px;width:54px;height:20px;background:#e1e1e1;border:1px solid #adadad;box-sizing:border-box;"></div>
<div class="t" style="top:227.5px;height:14px;line-height:14px;font-size:10px;color:#000;left:654px;">1</div>
<svg class="b" style="left:688px;top:232.0px" width="9" height="5" viewBox="0 0 9 5"><path d="M0.5 0.5 L4.5 4.5 L8.5 0.5" fill="none" stroke="#333" stroke-width="1.2"/></svg>
<div class="b" style="left:717px;top:127px;width:13px;height:13px;background:#fff;border:1px solid #333;box-sizing:border-box;"></div>
<div class="t" style="top:127.0px;height:15px;line-height:15px;font-size:11px;color:#000;letter-spacing:-0.278px;left:733.3px;">Kalk. Nat. Produktion</div>
<div class="b" style="left:717px;top:143px;width:13px;height:13px;background:#fff;border:1px solid #333;box-sizing:border-box;"><svg width="11" height="11" viewBox="0 0 11 11" style="display:block"><path d="M1.5 5.5 L4.2 8.2 L9.6 2.4" fill="none" stroke="#222" stroke-width="1.3"/></svg></div>
<div class="t" style="top:142.8px;height:15px;line-height:15px;font-size:11px;color:#000;letter-spacing:-0.279px;left:733.3px;">Mengen Optimierung</div>
<div class="b" style="left:717px;top:159px;width:13px;height:13px;background:#fff;border:1px solid #333;box-sizing:border-box;"></div>
<div class="t" style="top:158.7px;height:15px;line-height:15px;font-size:11px;color:#000;letter-spacing:-0.222px;left:733.3px;">Eingabe ist Anz. Pak.</div>
<div class="b" style="left:717px;top:175px;width:13px;height:13px;background:#fff;border:1px solid #333;box-sizing:border-box;"></div>
<div class="t" style="top:174.7px;height:15px;line-height:15px;font-size:11px;color:#000;letter-spacing:-0.124px;left:733.3px;">TAB-Sprünge im LV-Text</div>
<div class="b" style="left:717px;top:197px;width:13px;height:13px;background:#fff;border:1px solid #333;box-sizing:border-box;"></div>
<div class="t" style="top:196.5px;height:15px;line-height:15px;font-size:11px;color:#000;letter-spacing:-0.619px;left:733.3px;">WG</div>
<div class="b" style="left:756px;top:194px;width:70px;height:18px;background:#f2f2f2;border:1px solid #d2d2d2;box-sizing:border-box;"></div>
<div class="t" style="top:195.8px;height:17px;line-height:17px;font-size:13px;color:#7a7a7a;right:1100.00px;">0,00</div>
<div class="t" style="top:195.3px;height:18px;line-height:18px;font-size:14px;color:#000;letter-spacing:-1.448px;left:831.5px;">%</div>
<div class="t" style="top:213.8px;height:15px;line-height:15px;font-size:11px;color:#7f7f7f;font-weight:bold;letter-spacing:0.022px;left:727px;">Suche bei Nr. Eingabe</div>
<svg class="b" style="left:717px;top:230px" width="14" height="14" viewBox="0 0 14 14"><circle cx="6.7" cy="6.7" r="6" fill="#fff" stroke="#333" stroke-width="1"/></svg>
<div class="t" style="top:229.7px;height:15px;line-height:15px;font-size:11px;color:#000;letter-spacing:-0.052px;left:733.3px;">Artikel</div>
<svg class="b" style="left:786px;top:230px" width="14" height="14" viewBox="0 0 14 14"><circle cx="6.7" cy="6.7" r="6" fill="#fff" stroke="#333" stroke-width="1"/><circle cx="6.7" cy="6.7" r="3" fill="#222"/></svg>
<div class="t" style="top:229.7px;height:15px;line-height:15px;font-size:11px;color:#000;letter-spacing:-0.136px;left:802.4px;">Leistung</div>
<svg class="b" style="left:866px;top:128px" width="16" height="16" viewBox="0 0 16 16"><rect width="16" height="16" fill="#ffff00"/><path d="M13.8 5 A5.6 5.4 0 1 0 13.8 11.2 V8.3 H8.3" fill="none" stroke="#000" stroke-width="3.6"/></svg>
<div class="t" style="top:127.7px;height:15px;line-height:15px;font-size:11px;color:#606060;letter-spacing:-0.248px;left:887.2px;">GAEB 8x Import</div>
<svg class="b" style="left:866px;top:152px" width="16" height="16" viewBox="0 0 16 16"><rect width="16" height="16" fill="#ffff00"/><path d="M13.8 5 A5.6 5.4 0 1 0 13.8 11.2 V8.3 H8.3" fill="none" stroke="#000" stroke-width="3.6"/><path d="M0.2 7.2 L3.6 4.4 L7.4 9.6 L13.6 0.3 H16 V3.2 L7.7 15.6 Z" fill="#12e612"/></svg>
<div class="t" style="top:151.7px;height:15px;line-height:15px;font-size:11px;color:#606060;letter-spacing:-0.172px;left:887.2px;">GAEB 84 Export</div>
<svg class="b" style="left:866px;top:174px" width="16" height="16" viewBox="0 0 16 16"><rect width="16" height="16" fill="#ffff00"/><text x="8" y="7.4" font-family="Liberation Mono" font-weight="bold" font-size="8.6" text-anchor="middle" fill="#000" textLength="14">REB</text><text x="8" y="15" font-family="Liberation Mono" font-weight="bold" font-size="8.6" text-anchor="middle" fill="#0a9a0a" textLength="14">D11</text></svg>
<div class="t" style="top:173.7px;height:15px;line-height:15px;font-size:11px;color:#606060;letter-spacing:-0.349px;left:887.2px;">REB D11 Export</div>
<svg class="b" style="left:866px;top:198px" width="16" height="16" viewBox="0 0 16 16"><text x="0" y="6.6" font-family="Liberation Sans" font-weight="bold" font-size="9" fill="#3a3a3a" textLength="11" lengthAdjust="spacingAndGlyphs">22</text><text x="11.3" y="6.6" font-family="Liberation Sans" font-weight="bold" font-size="9" fill="#1f62e0" textLength="4.7" lengthAdjust="spacingAndGlyphs">1</text><text x="0" y="15.8" font-family="Liberation Sans" font-weight="bold" font-size="9" fill="#3a3a3a" textLength="11" lengthAdjust="spacingAndGlyphs">22</text><text x="11" y="15.8" font-family="Liberation Sans" font-weight="bold" font-size="9" fill="#1f62e0" textLength="5" lengthAdjust="spacingAndGlyphs">3</text></svg>
<div class="t" style="top:197.7px;height:15px;line-height:15px;font-size:11px;color:#606060;letter-spacing:-0.169px;left:887.2px;">EFB Zuschläge</div>
<svg class="b" style="left:867px;top:221.5px" width="14" height="13" viewBox="0 0 14 13"><path d="M1 0.5 H13 V12.5 H1 Z" fill="#3f89b5"/><path d="M1 0.5 H12 C10 6 6 9 1 9.5 Z" fill="#1e3f7a"/><path d="M1 11.5 C6 11 11 7 13 1.5 V3.5 C11 8.5 6 12 1 12.5 Z" fill="#fff"/></svg>
<div class="t" style="top:219.7px;height:15px;line-height:15px;font-size:11px;color:#606060;letter-spacing:-0.297px;left:887.2px;">UGL - Import</div>
<svg class="b" style="left:994px;top:128.5px" width="12" height="15" viewBox="0 0 12 15"><path d="M1 5.5 L6 0.8 L11 5.5" fill="none" stroke="#d8d8d8" stroke-width="1"/><path d="M1.3 6.5 C1.3 4.5 3 3.5 3.8 3.5 C4.8 3.5 5.7 4.5 5.7 6.5 V11 H1.3 Z" fill="#e0242e"/><path d="M6.3 6.5 C6.3 4.5 7.2 3.5 8.2 3.5 C9 3.5 10.7 4.5 10.7 6.5 V11 H6.3 Z" fill="#1f7fd0"/><rect x="1.3" y="11" width="9.4" height="2.8" fill="#4a2a30"/><rect x="2.5" y="12" width="7" height="0.8" fill="#d8c8c8"/></svg>
<div class="t" style="top:127.7px;height:15px;line-height:15px;font-size:11px;color:#606060;letter-spacing:-0.294px;left:1013.2px;">Import Hagos</div>
<svg class="b" style="left:991.8px;top:154.6px" width="16" height="15" viewBox="0 0 16 15"><rect x="1.38" y="0.35" width="2.9" height="2.9" fill="#0e8a8a"/><rect x="8.30" y="0.35" width="2.9" height="2.9" fill="#c8901a"/><rect x="5.42" y="1.96" width="2.9" height="2.9" fill="#58b818"/><rect x="11.30" y="1.96" width="2.9" height="2.9" fill="#000"/><rect x="2.54" y="4.61" width="2.9" height="2.9" fill="#58b818"/><rect x="5.42" y="4.61" width="2.9" height="2.9" fill="#a87810"/><rect x="8.30" y="4.61" width="2.9" height="2.9" fill="#000"/><rect x="12.69" y="4.61" width="2.9" height="2.9" fill="#0e8a8a"/><rect x="0.00" y="7.50" width="2.9" height="2.9" fill="#000"/><rect x="5.42" y="7.50" width="2.9" height="2.9" fill="#0e8a8a"/><rect x="8.30" y="7.50" width="2.9" height="2.9" fill="#58b818"/><rect x="11.30" y="7.50" width="2.9" height="2.9" fill="#c8901a"/><rect x="2.54" y="10.61" width="2.9" height="2.9" fill="#c8901a"/><rect x="5.42" y="11.19" width="2.9" height="2.9" fill="#000"/><rect x="8.30" y="10.61" width="2.9" height="2.9" fill="#0e8a8a"/><rect x="11.30" y="11.19" width="2.9" height="2.9" fill="#58b818"/></svg>
<div class="t" style="top:153.7px;height:15px;line-height:15px;font-size:11px;color:#606060;letter-spacing:-0.207px;left:1013px;">Exp. ImmoOffice</div>
<div class="t" style="top:179.7px;height:15px;line-height:15px;font-size:11px;color:#666;font-weight:bold;letter-spacing:0.108px;left:998.2px;">Imp. / Ex. Fremd</div>
<svg class="b" style="left:991.7px;top:202px" width="17" height="16" viewBox="0 0 17 16"><path d="M0.2 15.7 V8 L6.3 5.1 V1.6 L8.6 0.3 H13.3 L16.1 6.3 V11.5 L11.5 15.7 Z" fill="#a4a4a4"/></svg>
<div class="t" style="top:201.8px;height:15px;line-height:15px;font-size:11px;color:#c9c9c9;letter-spacing:0.027px;left:1013px;">Lagerort wählen</div>
<svg class="b" style="left:992.7px;top:224px" width="15" height="14" viewBox="0 0 15 14"><path d="M3 5 L7.5 0.8 L12 5" fill="none" stroke="#a9cbe6" stroke-width="1.2"/><path d="M0.3 5 H14.7 L12.8 13.3 H2.2 Z" fill="#4c9fd6" stroke="#2d7db8" stroke-width="0.6"/><path d="M4.2 7 V11.5 M6.4 7 V11.5 M8.6 7 V11.5 M10.8 7 V11.5" stroke="#d8ecfa" stroke-width="1"/></svg>
<div class="t" style="top:223.7px;height:15px;line-height:15px;font-size:11px;color:#606060;letter-spacing:0.056px;left:1013px;">Best. / Anfrage</div>
<svg class="b" style="left:1107.8px;top:128.6px" width="17" height="15" viewBox="0 0 17 15"><path d="M5.2 2.4 L11.5 0.5 L16.2 9.4 L9.8 14.5 Z" fill="#1a1a1a"/><path d="M6.6 3 L11 1.7 L14.6 8.6 L10.2 12 Z" fill="#5d7d9c"/><path d="M6.6 3 L9 2.3 L12 8.8 L10.2 12 Z" fill="#8fb0cc" opacity="0.7"/><path d="M0 5.8 H6 V2.9 L12.7 8.1 L6 13.3 V10.4 H0 Z" fill="#f40000"/></svg>
<div class="t" style="top:127.7px;height:15px;line-height:15px;font-size:11px;color:#606060;letter-spacing:-0.153px;left:1129px;">Export -&gt; Handy</div>
<svg class="b" style="left:1107.8px;top:154.3px" width="17" height="15" viewBox="0 0 17 15"><path d="M5.2 2.4 L11.5 0.5 L16.2 9.4 L9.8 14.5 Z" fill="#1a1a1a"/><path d="M6.6 3 L11 1.7 L14.6 8.6 L10.2 12 Z" fill="#5d7d9c"/><path d="M6.6 3 L9 2.3 L12 8.8 L10.2 12 Z" fill="#8fb0cc" opacity="0.7"/><path d="M12.7 5.6 H6.3 V2.6 L0 8.2 L6.3 13.8 V10.6 H12.7 Z" fill="#f40000"/></svg>
<div class="t" style="top:153.7px;height:15px;line-height:15px;font-size:11px;color:#606060;letter-spacing:-0.245px;left:1129px;">Import &lt;- Handy</div>
<div class="t" style="top:179.7px;height:15px;line-height:15px;font-size:11px;color:#666;font-weight:bold;letter-spacing:0.276px;left:1139.2px;">Aufmaß</div>
<svg class="b" style="left:1108px;top:202px" width="16" height="16" viewBox="0 0 16 16"><rect width="16" height="16" fill="#fff"/><rect x="0" y="0" width="4" height="4" fill="#000"/><rect x="1" y="1" width="2" height="2" fill="#fff"/><rect x="12" y="0" width="4" height="4" fill="#000"/><rect x="13" y="1" width="2" height="2" fill="#fff"/><rect x="0" y="12" width="4" height="4" fill="#000"/><rect x="1" y="13" width="2" height="2" fill="#fff"/><rect x="5" y="1" width="1.05" height="1.05" fill="#000"/><rect x="6" y="1" width="1.05" height="1.05" fill="#000"/><rect x="10" y="1" width="1.05" height="1.05" fill="#000"/><rect x="5" y="2" width="1.05" height="1.05" fill="#000"/><rect x="6" y="2" width="1.05" height="1.05" fill="#000"/><rect x="7" y="2" width="1.05" height="1.05" fill="#000"/><rect x="8" y="2" width="1.05" height="1.05" fill="#000"/><rect x="9" y="2" width="1.05" height="1.05" fill="#000"/><rect x="10" y="2" width="1.05" height="1.05" fill="#000"/><rect x="5" y="3" width="1.05" height="1.05" fill="#000"/><rect x="8" y="3" width="1.05" height="1.05" fill="#000"/><rect x="10" y="3" width="1.05" height="1.05" fill="#000"/><rect x="6" y="4" width="1.05" height="1.05" fill="#000"/><rect x="7" y="4" width="1.05" height="1.05" fill="#000"/><rect x="9" y="4" width="1.05" height="1.05" fill="#000"/><rect x="10" y="4" width="1.05" height="1.05" fill="#000"/><rect x="2" y="5" width="1.05" height="1.05" fill="#000"/><rect x="4" y="5" width="1.05" height="1.05" fill="#000"/><rect x="6" y="5" width="1.05" height="1.05" fill="#000"/><rect x="11" y="5" width="1.05" height="1.05" fill="#000"/><rect x="12" y="5" width="1.05" height="1.05" fill="#000"/><rect x="13" y="5" width="1.05" height="1.05" fill="#000"/><rect x="14" y="5" width="1.05" height="1.05" fill="#000"/><rect x="15" y="5" width="1.05" height="1.05" fill="#000"/><rect x="0" y="6" width="1.05" height="1.05" fill="#000"/><rect x="2" y="6" width="1.05" height="1.05" fill="#000"/><rect x="4" y="6" width="1.05" height="1.05" fill="#000"/><rect x="5" y="6" width="1.05" height="1.05" fill="#000"/><rect x="7" y="6" width="1.05" height="1.05" fill="#000"/><rect x="8" y="6" width="1.05" height="1.05" fill="#000"/><rect x="9" y="6" width="1.05" height="1.05" fill="#000"/><rect x="11" y="6" width="1.05" height="1.05" fill="#000"/><rect x="13" y="6" width="1.05" height="1.05" fill="#000"/><rect x="0" y="7" width="1.05" height="1.05" fill="#000"/><rect x="2" y="7" width="1.05" height="1.05" fill="#000"/><rect x="3" y="7" width="1.05" height="1.05" fill="#000"/><rect x="4" y="7" width="1.05" height="1.05" fill="#000"/><rect x="5" y="7" width="1.05" height="1.05" fill="#000"/><rect x="6" y="7" width="1.05" height="1.05" fill="#000"/><rect x="8" y="7" width="1.05" height="1.05" fill="#000"/><rect x="12" y="7" width="1.05" height="1.05" fill="#000"/><rect x="13" y="7" width="1.05" height="1.05" fill="#000"/><rect x="14" y="7" width="1.05" height="1.05" fill="#000"/><rect x="0" y="8" width="1.05" height="1.05" fill="#000"/><rect x="4" y="8" width="1.05" height="1.05" fill="#000"/><rect x="6" y="8" width="1.05" height="1.05" fill="#000"/><rect x="7" y="8" width="1.05" height="1.05" fill="#000"/><rect x="10" y="8" width="1.05" height="1.05" fill="#000"/><rect x="12" y="8" width="1.05" height="1.05" fill="#000"/><rect x="13" y="8" width="1.05" height="1.05" fill="#000"/><rect x="14" y="8" width="1.05" height="1.05" fill="#000"/><rect x="15" y="8" width="1.05" height="1.05" fill="#000"/><rect x="0" y="9" width="1.05" height="1.05" fill="#000"/><rect x="1" y="9" width="1.05" height="1.05" fill="#000"/><rect x="4" y="9" width="1.05" height="1.05" fill="#000"/><rect x="5" y="9" width="1.05" height="1.05" fill="#000"/><rect x="7" y="9" width="1.05" height="1.05" fill="#000"/><rect x="8" y="9" width="1.05" height="1.05" fill="#000"/><rect x="9" y="9" width="1.05" height="1.05" fill="#000"/><rect x="10" y="9" width="1.05" height="1.05" fill="#000"/><rect x="12" y="9" width="1.05" height="1.05" fill="#000"/><rect x="13" y="9" width="1.05" height="1.05" fill="#000"/><rect x="14" y="9" width="1.05" height="1.05" fill="#000"/><rect x="0" y="10" width="1.05" height="1.05" fill="#000"/><rect x="1" y="10" width="1.05" height="1.05" fill="#000"/><rect x="3" y="10" width="1.05" height="1.05" fill="#000"/><rect x="8" y="10" width="1.05" height="1.05" fill="#000"/><rect x="9" y="10" width="1.05" height="1.05" fill="#000"/><rect x="10" y="10" width="1.05" height="1.05" fill="#000"/><rect x="12" y="10" width="1.05" height="1.05" fill="#000"/><rect x="13" y="10" width="1.05" height="1.05" fill="#000"/><rect x="6" y="11" width="1.05" height="1.05" fill="#000"/><rect x="7" y="11" width="1.05" height="1.05" fill="#000"/><rect x="9" y="11" width="1.05" height="1.05" fill="#000"/><rect x="10" y="11" width="1.05" height="1.05" fill="#000"/><rect x="11" y="11" width="1.05" height="1.05" fill="#000"/><rect x="12" y="11" width="1.05" height="1.05" fill="#000"/><rect x="13" y="11" width="1.05" height="1.05" fill="#000"/><rect x="6" y="12" width="1.05" height="1.05" fill="#000"/><rect x="7" y="12" width="1.05" height="1.05" fill="#000"/><rect x="8" y="12" width="1.05" height="1.05" fill="#000"/><rect x="9" y="12" width="1.05" height="1.05" fill="#000"/><rect x="12" y="12" width="1.05" height="1.05" fill="#000"/><rect x="7" y="13" width="1.05" height="1.05" fill="#000"/><rect x="9" y="13" width="1.05" height="1.05" fill="#000"/><rect x="10" y="13" width="1.05" height="1.05" fill="#000"/><rect x="13" y="13" width="1.05" height="1.05" fill="#000"/><rect x="5" y="14" width="1.05" height="1.05" fill="#000"/><rect x="6" y="14" width="1.05" height="1.05" fill="#000"/><rect x="7" y="14" width="1.05" height="1.05" fill="#000"/><rect x="8" y="14" width="1.05" height="1.05" fill="#000"/><rect x="10" y="14" width="1.05" height="1.05" fill="#000"/><rect x="14" y="14" width="1.05" height="1.05" fill="#000"/><rect x="7" y="15" width="1.05" height="1.05" fill="#000"/><rect x="13" y="15" width="1.05" height="1.05" fill="#000"/><rect x="14" y="15" width="1.05" height="1.05" fill="#000"/><rect x="15" y="15" width="1.05" height="1.05" fill="#000"/></svg>
<div class="t" style="top:201.8px;height:15px;line-height:15px;font-size:11px;color:#606060;letter-spacing:-0.184px;left:1129px;">Import &lt;- K-Scan</div>
<svg class="b" style="left:1108.5px;top:224px" width="16" height="16" viewBox="0 0 16 16"><defs><radialGradient id="inf" cx="0.5" cy="0.3" r="0.8"><stop offset="0" stop-color="#b8d4f6"/><stop offset="1" stop-color="#5b8fdc"/></radialGradient></defs><ellipse cx="8" cy="15.2" rx="5" ry="0.8" fill="#cfcfcf"/><circle cx="7.8" cy="7.6" r="7.4" fill="url(#inf)" stroke="#86abdf" stroke-width="0.5"/><circle cx="7.8" cy="3.8" r="1.2" fill="#fff"/><rect x="6.8" y="6" width="2" height="6" rx="0.6" fill="#fff"/></svg>
<div class="t" style="top:223.7px;height:15px;line-height:15px;font-size:11px;color:#606060;letter-spacing:-0.198px;left:1128px;">APP Store Info</div>
<svg class="b" style="left:1249px;top:127.7px" width="32" height="28.5" viewBox="0 0 32 28.5"><circle cx="15.7" cy="4.4" r="3.6" fill="#333"/><circle cx="15.7" cy="4.4" r="1.3" fill="#fff"/><rect x="0" y="8" width="31.8" height="20.3" rx="1.8" fill="#333"/><rect x="6.9" y="6.5" width="18" height="4.9" fill="#fff"/><rect x="8.2" y="7.2" width="15.4" height="3" rx="0.6" fill="#333"/><rect x="12.6" y="5" width="6.2" height="3" fill="#333"/><ellipse cx="9" cy="17.6" rx="2.8" ry="3.4" fill="#fff"/><path d="M4 25.4 C4 22.6 6 21.6 9 21.6 C12 21.6 14 22.6 14 25.4 Z" fill="#fff"/><path d="M16.9 17.2 H27 M16.9 19.2 H27 M16.9 21.2 H27 M16.9 23.2 H27" stroke="#f5d020" stroke-width="0.95"/></svg>
<div class="t" style="top:163.8px;height:15px;line-height:15px;font-size:11px;color:#606060;letter-spacing:-0.228px;left:1244.1px;">Deckblatt</div>
<div class="t" style="top:177.8px;height:15px;line-height:15px;font-size:11px;color:#606060;letter-spacing:0.032px;left:1235.2px;">Anschreiben</div>
<svg class="b" style="left:1335.8px;top:125px" width="31" height="30" viewBox="0 0 31 30"><defs><linearGradient id="pr1" x1="0" y1="0" x2="0" y2="1"><stop offset="0" stop-color="#f6f6f6"/><stop offset="0.55" stop-color="#dcdcdc"/><stop offset="1" stop-color="#bdbdbd"/></linearGradient><linearGradient id="pr2" x1="0" y1="0" x2="0" y2="1"><stop offset="0" stop-color="#ffffff"/><stop offset="0.6" stop-color="#f2f2f2"/><stop offset="1" stop-color="#b4b4b4"/></linearGradient><linearGradient id="pr3" x1="0" y1="0" x2="1" y2="0"><stop offset="0" stop-color="#b0b0b0"/><stop offset="0.12" stop-color="#f0f0f0"/><stop offset="0.88" stop-color="#f0f0f0"/><stop offset="1" stop-color="#b0b0b0"/></linearGradient></defs><rect x="0.8" y="8.8" width="29.4" height="15" rx="1.2" fill="url(#pr3)"/><rect x="0.8" y="8.8" width="29.4" height="15" rx="1.2" fill="url(#pr1)" opacity="0.8"/><rect x="6.5" y="0.4" width="17.7" height="11.5" rx="0.8" fill="url(#pr2)" stroke="#c0c0c0" stroke-width="0.7"/><rect x="6.5" y="13" width="17.7" height="4.3" fill="#6a6a6a"/><rect x="6.5" y="13" width="17.7" height="1.3" fill="#8c8c8c"/><rect x="5.4" y="19.4" width="19.6" height="2.6" fill="#161616"/><path d="M5 21.9 H25.6 L26.2 28.6 C26.2 29.4 25.6 29.8 25 29.8 H5.6 C5 29.8 4.2 29.4 4.4 28.6 Z" fill="#f4f4f4" stroke="#b4b4b4" stroke-width="0.8"/></svg>
<div class="t" style="top:132.5px;height:15px;line-height:15px;font-size:11px;color:#606060;letter-spacing:-0.179px;left:1377.2px;">Beleg drucken</div>
<svg class="b" style="left:1335.8px;top:160.8px" width="31" height="30" viewBox="0 0 31 30"><defs><linearGradient id="pr1" x1="0" y1="0" x2="0" y2="1"><stop offset="0" stop-color="#f6f6f6"/><stop offset="0.55" stop-color="#dcdcdc"/><stop offset="1" stop-color="#bdbdbd"/></linearGradient><linearGradient id="pr2" x1="0" y1="0" x2="0" y2="1"><stop offset="0" stop-color="#ffffff"/><stop offset="0.6" stop-color="#f2f2f2"/><stop offset="1" stop-color="#b4b4b4"/></linearGradient><linearGradient id="pr3" x1="0" y1="0" x2="1" y2="0"><stop offset="0" stop-color="#b0b0b0"/><stop offset="0.12" stop-color="#f0f0f0"/><stop offset="0.88" stop-color="#f0f0f0"/><stop offset="1" stop-color="#b0b0b0"/></linearGradient></defs><rect x="0.8" y="8.8" width="29.4" height="15" rx="1.2" fill="url(#pr3)"/><rect x="0.8" y="8.8" width="29.4" height="15" rx="1.2" fill="url(#pr1)" opacity="0.8"/><rect x="6.5" y="0.4" width="17.7" height="11.5" rx="0.8" fill="url(#pr2)" stroke="#c0c0c0" stroke-width="0.7"/><rect x="6.5" y="13" width="17.7" height="4.3" fill="#6a6a6a"/><rect x="6.5" y="13" width="17.7" height="1.3" fill="#8c8c8c"/><rect x="5.4" y="19.4" width="19.6" height="2.6" fill="#161616"/><path d="M5 21.9 H25.6 L26.2 28.6 C26.2 29.4 25.6 29.8 25 29.8 H5.6 C5 29.8 4.2 29.4 4.4 28.6 Z" fill="#f4f4f4" stroke="#b4b4b4" stroke-width="0.8"/></svg>
<svg class="b" style="left:1335.8px;top:160.8px" width="32" height="32" viewBox="0 0 32 32"><path d="M26.5 9.5 L31.5 13.5 L18.5 29 L14 25 Z" fill="#2f6f9a"/><path d="M26 12 L29.5 15 M24 14.5 L27.5 17.5 M22 17 L25.5 20 M20 19.5 L23.5 22.5 M18 22 L21.5 25" stroke="#8fc0e0" stroke-width="0.6"/><path d="M11.2 13 L29.4 31 H11.2 Z" fill="#f7d21a" stroke="#e0a800" stroke-width="0.7"/><path d="M14.4 21.5 L21.5 28.3 H14.4 Z" fill="#2a6aa0"/><path d="M12 30 H28" stroke="#e8a000" stroke-width="1"/></svg>
<div class="t" style="top:168.5px;height:15px;line-height:15px;font-size:11px;color:#606060;letter-spacing:-0.243px;left:1377.2px;">Aufmaß drucken</div>
<div class="t" style="top:201.7px;height:15px;line-height:15px;font-size:11px;color:#606060;letter-spacing:-0.160px;left:1229.4px;">Leitweg-ID X-Rg.</div>
<div class="b" style="left:1316px;top:198px;width:149px;height:22px;background:#f4f4f4;border:1px solid #6e6e6e;box-sizing:border-box;"></div>
<div class="t" style="top:227.5px;height:15px;line-height:15px;font-size:11px;color:#606060;letter-spacing:-0.301px;left:1241px;">Kommitext:</div>
<div class="b" style="left:1316px;top:222px;width:149px;height:22px;background:#f4f4f4;border:1px solid #6e6e6e;box-sizing:border-box;"></div>
<svg class="b" style="left:1530px;top:129px" width="30" height="30" viewBox="0 0 30 30"><path d="M0.5 1.5 H29.5 V29.5 H3 L0.5 27 Z" fill="#3d86d0" stroke="#2a6cb3" stroke-width="0.8"/><rect x="3.5" y="1.5" width="23" height="15.5" fill="#f6f0e2"/><rect x="3.5" y="1.5" width="23" height="3" fill="#f6c21c"/><path d="M3.5 7 H26.5 M3.5 9.5 H26.5 M3.5 12 H26.5 M3.5 14.5 H26.5" stroke="#e8b8b0" stroke-width="0.7"/><rect x="7" y="19.5" width="16" height="10" fill="#dfeef4"/><rect x="10" y="21.5" width="3" height="6.5" fill="#3d86d0"/></svg>
<div class="t" style="top:165.5px;height:15px;line-height:15px;font-size:11px;color:#606060;letter-spacing:-0.138px;left:1504.3px;">Position speichern</div>
<div class="t" style="top:179.5px;height:15px;line-height:15px;font-size:11px;color:#606060;letter-spacing:-0.191px;left:1502.2px;">im Leistungsstamm</div>
<svg class="b" style="left:1479.2px;top:223.8px" width="15.5" height="16.5" viewBox="0 0 15.5 16.5"><path d="M7.7 0 L15.4 4.5 L7.7 9 L0 4.5 Z" fill="#2c2c2c"/><path d="M0 5.7 L7.7 10.2 L15.4 5.7 V7.9 L7.7 12.4 L0 7.9 Z" fill="#2c2c2c"/><path d="M0 9.1 L7.7 13.6 L15.4 9.1 V11.3 L7.7 15.8 L0 11.3 Z" fill="#2c2c2c"/></svg>
<div class="t" style="top:223.8px;height:15px;line-height:15px;font-size:11px;color:#606060;letter-spacing:-0.207px;left:1499.4px;">Artikel im Stamm öffnen</div>
<div class="b" style="left:12px;top:268px;width:119px;height:34px;background:#2b579a;"></div>
<div class="t" style="top:276.3px;height:18px;line-height:18px;font-size:14px;color:#fff;font-weight:bold;letter-spacing:-0.444px;left:36.0px;">Funktionen</div>
<div class="b" style="left:135px;top:268px;width:1403px;height:34px;background:#2b579a;"></div>
<div class="t" style="top:276.8px;height:17px;line-height:17px;font-size:13px;color:#fff;font-weight:bold;letter-spacing:0.081px;left:803.5px;">Kopfdaten</div>
<div class="b" style="left:1541px;top:268px;width:371px;height:34px;background:#2b579a;"></div>
<div class="t" style="top:276.8px;height:17px;line-height:17px;font-size:13px;color:#fff;font-weight:bold;letter-spacing:0.208px;left:1702.5px;">Summe</div>
<div class="t" style="top:307.0px;height:16px;line-height:16px;font-size:12px;color:#2b579a;font-weight:bold;letter-spacing:-0.379px;left:48.6px;">Position</div>
<svg class="b" style="left:28.8px;top:330px" width="30" height="31" viewBox="0 0 30 31"><defs><linearGradient id="pg" x1="0" y1="0" x2="1" y2="1"><stop offset="0" stop-color="#ffffff"/><stop offset="1" stop-color="#e2e2e2"/></linearGradient><radialGradient id="gp" cx="0.4" cy="0.3" r="0.8"><stop offset="0" stop-color="#7be86a"/><stop offset="1" stop-color="#12a312"/></radialGradient></defs><path d="M0.5 2.5 H25 V21 L16 30 H0.5 Z" fill="url(#pg)" stroke="#c4c4c4" stroke-width="0.8"/><path d="M25 21 L16 30 C18 26 17.5 23.5 16.5 22 C19 22.8 22 22.5 25 21 Z" fill="#f8f8f8" stroke="#bdbdbd" stroke-width="0.7"/><circle cx="21" cy="8" r="7.6" fill="url(#gp)" stroke="#0d8f0d" stroke-width="0.7"/><path d="M16.5 8 H25.5 M21 3.5 V12.5" stroke="#fff" stroke-width="2.4"/></svg>
<div class="t" style="top:363.7px;height:15px;line-height:15px;font-size:11px;color:#606060;letter-spacing:-0.593px;left:32.1px;">Neu</div>
<svg class="b" style="left:88px;top:330px" width="29" height="30" viewBox="0 0 29 30"><path d="M0.5 0.5 H17 L23.5 7 V29 H0.5 Z" fill="url(#pg)" stroke="#c4c4c4" stroke-width="0.8"/><path d="M17 0.5 V7 H23.5" fill="#f4f4f4" stroke="#c4c4c4" stroke-width="0.8"/><path d="M9 27.5 L10.5 22.5 L24 9.5 L27.5 13 L14 26 Z" fill="#f5a623" stroke="#c77d10" stroke-width="0.6"/><path d="M24 9.5 L26 7.8 C27 7 29 9 28.3 10 L27.5 13 Z" fill="#e48ab0"/><path d="M9 27.5 L10.5 22.5 L14 26 Z" fill="#f3dcb4"/><path d="M9 27.5 L9.6 25.6 L10.9 26.9 Z" fill="#333"/></svg>
<div class="t" style="top:363.7px;height:15px;line-height:15px;font-size:11px;color:#606060;letter-spacing:-0.171px;left:74.2px;">Bearbeiten</div>
<svg class="b" style="left:28px;top:387px" width="30" height="31" viewBox="0 0 30 31"><defs><linearGradient id="tr" x1="0" y1="0" x2="1" y2="0"><stop offset="0" stop-color="#4a4a4a"/><stop offset="0.3" stop-color="#dadada"/><stop offset="0.55" stop-color="#9a9a9a"/><stop offset="1" stop-color="#3c3c3c"/></linearGradient><radialGradient id="cd" cx="0.45" cy="0.4" r="0.7"><stop offset="0" stop-color="#f4f4f4"/><stop offset="1" stop-color="#8e8e8e"/></radialGradient></defs><path d="M1.8 6 H20.2 L18.6 28.5 C15 31 7 31 3.4 28.5 Z" fill="url(#tr)"/><path d="M5.2 9 L6.3 28.5 M8.4 9.5 L9 29.3 M11.6 9.5 L11.8 29.5 M14.8 9.3 L14.5 29.2 M17.6 9 L16.8 28" stroke="#3a3a3a" stroke-width="1"/><ellipse cx="11" cy="5.6" rx="10.2" ry="3.9" fill="#2c2c2c"/><ellipse cx="11" cy="5.2" rx="8.6" ry="2.7" fill="#bdbdbd"/><path d="M4 5 L6.5 2 L9.5 4 L12.5 0.6 L15.5 3.2 L18 2.4 L18 5.6 L11 7 L4 6.2 Z" fill="#fafafa" stroke="#c4c4c4" stroke-width="0.4"/><path d="M1 6.5 C4 10 18 10 21 6.5" fill="none" stroke="#1c1c1c" stroke-width="1.3"/><ellipse cx="23.2" cy="20.5" rx="5.6" ry="9" fill="url(#cd)" stroke="#7a7a7a" stroke-width="0.8" transform="rotate(-8 23.2 20.5)"/><ellipse cx="24.2" cy="20.8" rx="1.7" ry="3" fill="#777" stroke="#ddd" stroke-width="0.7" transform="rotate(-8 24.2 20.8)"/></svg>
<div class="t" style="top:420.2px;height:15px;line-height:15px;font-size:11px;color:#606060;letter-spacing:-0.329px;left:23.2px;">Position</div>
<div class="t" style="top:433.7px;height:15px;line-height:15px;font-size:11px;color:#606060;letter-spacing:-0.045px;left:22.2px;">löschen</div>
<svg class="b" style="left:84.7px;top:387.7px" width="31" height="29" viewBox="0 0 31 29"><defs><linearGradient id="lb" x1="0" y1="0" x2="0" y2="1"><stop offset="0" stop-color="#0f5a80"/><stop offset="1" stop-color="#13365e"/></linearGradient><linearGradient id="lr" x1="0" y1="0" x2="0" y2="1"><stop offset="0" stop-color="#e8602a"/><stop offset="1" stop-color="#d42a2a"/></linearGradient></defs><path d="M6.6 0 L13.3 10 H8.6 V23.8 H20 L22.7 28.2 H4.4 V10 H0 Z" fill="url(#lb)"/><path d="M8.8 0 H26.2 V18.2 H31 L24.3 28.2 L17.7 18.2 H22.7 V3.9 H11.4 Z" fill="url(#lr)"/><text x="9.2" y="21.6" font-family="Liberation Sans" font-style="italic" font-weight="bold" font-size="9" fill="#14507a">A</text><text x="15.8" y="13.3" font-family="Liberation Sans" font-style="italic" font-weight="bold" font-size="8.5" fill="#d83a32">B</text></svg>
<div class="t" style="top:420.2px;height:15px;line-height:15px;font-size:11px;color:#606060;letter-spacing:-0.025px;left:81.2px;">Langtext</div>
<div class="t" style="top:433.7px;height:15px;line-height:15px;font-size:11px;color:#606060;letter-spacing:0.105px;left:78.9px;">wechseln</div>
<svg class="b" style="left:30px;top:458px" width="23" height="32" viewBox="0 0 23 32"><defs><linearGradient id="al1" x1="0" y1="0" x2="1" y2="1"><stop offset="0" stop-color="#2e9a3e"/><stop offset="0.5" stop-color="#5ec05a"/><stop offset="1" stop-color="#2e9a3e"/></linearGradient><linearGradient id="al2" x1="0" y1="0" x2="1" y2="1"><stop offset="0" stop-color="#0d3a5a"/><stop offset="0.5" stop-color="#2c7ea0"/><stop offset="1" stop-color="#0d3a5a"/></linearGradient></defs><rect x="0" y="0" width="10" height="32" fill="url(#al1)"/><rect x="13" y="0" width="10" height="32" fill="url(#al2)"/><path d="M0 13.8 L10 4.5 H13 L23 13.8 V18.2 L13 28 H10 L0 18.2 Z" fill="#fff"/><text x="11.8" y="21.5" font-family="Liberation Sans" font-style="italic" font-size="19" text-anchor="middle" fill="#2a2a2a">A</text><path d="M3 17.3 C8 16.2 14 16.8 19 15.6" stroke="#2a2a2a" stroke-width="1.4" fill="none"/></svg>
<div class="t" style="top:492.1px;height:15px;line-height:15px;font-size:11px;color:#606060;letter-spacing:-0.055px;left:19.4px;">Alternativ</div>
<div class="t" style="top:506.0px;height:15px;line-height:15px;font-size:11px;color:#606060;letter-spacing:-0.329px;left:24.4px;">Position</div>
<svg class="b" style="left:89px;top:463.5px" width="26" height="21" viewBox="0 0 26 21"><rect x="0" y="0" width="26" height="5.2" fill="#3a3a3a"/><rect x="0" y="7.4" width="26" height="5.9" fill="#15506e"/><rect x="0" y="15.5" width="26" height="5.5" fill="#3a3a3a"/><rect x="4.8" y="0" width="2.2" height="21" fill="#fff"/><path d="M8.2 5.2 C8.2 1.6 10.5 0.3 13.4 0.3 C16.6 0.3 19 1.9 19 4.9 C19 7.6 17.2 8.4 15.8 9.6 C14.9 10.4 14.6 11.2 14.6 13.3 H10.8 C10.8 10.4 11.4 9.1 12.9 7.9 C14 7 14.9 6.4 14.9 5.2 C14.9 4.2 14.3 3.5 13.3 3.5 C12.2 3.5 11.6 4.3 11.6 5.6 Z" fill="#fff"/><rect x="10.6" y="16.2" width="4.2" height="4.2" fill="#fff"/></svg>
<div class="t" style="top:492.1px;height:15px;line-height:15px;font-size:11px;color:#606060;letter-spacing:-0.151px;left:80.8px;">Eventual</div>
<div class="t" style="top:506.0px;height:15px;line-height:15px;font-size:11px;color:#606060;letter-spacing:-0.329px;left:83.0px;">Position</div>
<div class="t" style="top:525.3px;height:16px;line-height:16px;font-size:12px;color:#2b579a;font-weight:bold;letter-spacing:-0.479px;left:47.2px;">Einfügen</div>
<svg class="b" style="left:20.9px;top:550.2px" width="13" height="13" viewBox="0 0 13 13"><rect x="0.4" y="0.4" width="10.2" height="11.6" fill="#f4f4f4" stroke="#d4d4d4" stroke-width="0.6"/><rect x="0.4" y="11.6" width="10.6" height="0.9" fill="#c8c8c8"/><rect x="1.2" y="1.6" width="4.8" height="1.1" fill="#e81010"/><rect x="1" y="4.6" width="5.6" height="5.6" fill="#d6d6d6"/><path d="M1 6.2 H6.6 M1 8 H6.6" stroke="#ececec" stroke-width="0.7"/><rect x="6.9" y="4.9" width="5.2" height="5.2" fill="#2eae2e" stroke="#1e8e1e" stroke-width="0.4"/><path d="M8.1 7.5 H10.9 M9.5 6.1 V8.9" stroke="#fff" stroke-width="1.1"/></svg>
<div class="t" style="top:547.9px;height:15px;line-height:15px;font-size:11px;color:#606060;letter-spacing:-0.283px;left:39.9px;">Titel Position</div>
<svg class="b" style="left:20.9px;top:572.2px" width="13" height="13" viewBox="0 0 13 13"><rect x="0.4" y="0.4" width="10.2" height="11.6" fill="#f4f4f4" stroke="#d4d4d4" stroke-width="0.6"/><rect x="0.4" y="11.6" width="10.6" height="0.9" fill="#c8c8c8"/><rect x="1.2" y="1.6" width="4.8" height="1.3" fill="#d8d8d8"/><rect x="1" y="5.4" width="5.8" height="2" fill="#333"/><rect x="1" y="8.6" width="5.6" height="1.6" fill="#d0d0d0"/><rect x="6.9" y="4.9" width="5.2" height="5.2" fill="#2eae2e" stroke="#1e8e1e" stroke-width="0.4"/><path d="M8.1 7.5 H10.9 M9.5 6.1 V8.9" stroke="#fff" stroke-width="1.1"/></svg>
<div class="t" style="top:569.7px;height:15px;line-height:15px;font-size:11px;color:#606060;letter-spacing:-0.080px;left:39.9px;">Textbaustein</div>
<svg class="b" style="left:19.3px;top:594.2px" width="15" height="16" viewBox="0 0 15 16"><path d="M7.5 0 L15 4.3 L7.5 8.6 L0 4.3 Z" fill="#333"/><path d="M0 5.4 L7.5 9.7 L15 5.4 V7.6 L7.5 11.9 L0 7.6 Z" fill="#333"/><path d="M0 8.7 L7.5 13 L15 8.7 V10.9 L7.5 15.2 L0 10.9 Z" fill="#333"/></svg>
<div class="t" style="top:593.9px;height:15px;line-height:15px;font-size:11px;color:#606060;letter-spacing:-0.117px;left:39.2px;">Artikelbaustein</div>
<svg class="b" style="left:21px;top:617.3px" width="12" height="14" viewBox="0 0 12 14"><rect width="12" height="14" fill="#a8c0ff"/><rect y="0" width="12" height="1.2" fill="#b4c6fa"/><rect y="1.2" width="12" height="1.8" fill="#a8a8ac"/><rect y="3" width="12" height="2" fill="#2f5cf0"/><rect y="5" width="12" height="1.8" fill="#a8a8ac"/><rect y="6.8" width="12" height="2.2" fill="#0a3cff"/></svg>
<div class="t" style="top:615.8px;height:15px;line-height:15px;font-size:11px;color:#606060;letter-spacing:-0.019px;left:40.3px;">Mustertafel</div>
<svg class="b" style="left:18.8px;top:644.4px" width="13" height="15" viewBox="0 0 13 15"><path d="M0.5 0.8 L11 2.8 V14.6 L0.5 12 Z" fill="#d8d8d8"/><path d="M0.5 0.8 L6 1.9 V7.4 L0.5 6.3 Z" fill="#2e6fd8"/><path d="M6 1.9 L11 2.8 V8.5 L6 7.4 Z" fill="#e02a2a"/><path d="M0.5 6.3 L6 7.4 V13.4 L0.5 12 Z" fill="#f2c81e"/><path d="M6 7.4 L11 8.5 V14.6 L6 13.4 Z" fill="#2ea82e"/><circle cx="6" cy="4.8" r="1.5" fill="#e02a2a"/><circle cx="3.4" cy="7" r="1.4" fill="#f2c81e"/><circle cx="8.4" cy="8" r="1.4" fill="#2ea82e"/><circle cx="6" cy="10.3" r="1.4" fill="#f2c81e"/><path d="M11 2.8 L12.6 2 V13.4 L11 14.6 Z" fill="#8a2020"/></svg>
<div class="t" style="top:644.1px;height:15px;line-height:15px;font-size:11px;color:#606060;letter-spacing:-0.111px;left:38.3px;">Leistung</div>
<svg class="b" style="left:18.8px;top:668.3px" width="13" height="15" viewBox="0 0 13 15"><path d="M0.5 0.8 L11 2.8 V14.6 L0.5 12 Z" fill="#d8d8d8"/><path d="M0.5 0.8 L6 1.9 V7.4 L0.5 6.3 Z" fill="#2e6fd8"/><path d="M6 1.9 L11 2.8 V8.5 L6 7.4 Z" fill="#e02a2a"/><path d="M0.5 6.3 L6 7.4 V13.4 L0.5 12 Z" fill="#f2c81e"/><path d="M6 7.4 L11 8.5 V14.6 L6 13.4 Z" fill="#2ea82e"/><circle cx="6" cy="4.8" r="1.5" fill="#e02a2a"/><circle cx="3.4" cy="7" r="1.4" fill="#f2c81e"/><circle cx="8.4" cy="8" r="1.4" fill="#2ea82e"/><circle cx="6" cy="10.3" r="1.4" fill="#f2c81e"/><path d="M11 2.8 L12.6 2 V13.4 L11 14.6 Z" fill="#8a2020"/></svg>
<div class="t" style="top:668.0px;height:15px;line-height:15px;font-size:11px;color:#606060;letter-spacing:-0.086px;left:38.3px;">Leistung (G)</div>
<svg class="b" style="left:18.8px;top:690.1999999999999px" width="13" height="15" viewBox="0 0 13 15"><path d="M0.5 0.8 L11 2.8 V14.6 L0.5 12 Z" fill="#d8d8d8"/><path d="M0.5 0.8 L6 1.9 V7.4 L0.5 6.3 Z" fill="#2e6fd8"/><path d="M6 1.9 L11 2.8 V8.5 L6 7.4 Z" fill="#e02a2a"/><path d="M0.5 6.3 L6 7.4 V13.4 L0.5 12 Z" fill="#f2c81e"/><path d="M6 7.4 L11 8.5 V14.6 L6 13.4 Z" fill="#2ea82e"/><circle cx="6" cy="4.8" r="1.5" fill="#e02a2a"/><circle cx="3.4" cy="7" r="1.4" fill="#f2c81e"/><circle cx="8.4" cy="8" r="1.4" fill="#2ea82e"/><circle cx="6" cy="10.3" r="1.4" fill="#f2c81e"/><path d="M11 2.8 L12.6 2 V13.4 L11 14.6 Z" fill="#8a2020"/></svg>
<div class="t" style="top:689.9px;height:15px;line-height:15px;font-size:11px;color:#606060;letter-spacing:0.016px;left:38.3px;">Leistung (V)</div>
<svg class="b" style="left:18.8px;top:714.0999999999999px" width="13" height="15" viewBox="0 0 13 15"><path d="M0.5 0.8 L11 2.8 V14.6 L0.5 12 Z" fill="#d8d8d8"/><path d="M0.5 0.8 L6 1.9 V7.4 L0.5 6.3 Z" fill="#2e6fd8"/><path d="M6 1.9 L11 2.8 V8.5 L6 7.4 Z" fill="#e02a2a"/><path d="M0.5 6.3 L6 7.4 V13.4 L0.5 12 Z" fill="#f2c81e"/><path d="M6 7.4 L11 8.5 V14.6 L6 13.4 Z" fill="#2ea82e"/><circle cx="6" cy="4.8" r="1.5" fill="#e02a2a"/><circle cx="3.4" cy="7" r="1.4" fill="#f2c81e"/><circle cx="8.4" cy="8" r="1.4" fill="#2ea82e"/><circle cx="6" cy="10.3" r="1.4" fill="#f2c81e"/><path d="M11 2.8 L12.6 2 V13.4 L11 14.6 Z" fill="#8a2020"/></svg>
<div class="t" style="top:713.8px;height:15px;line-height:15px;font-size:11px;color:#606060;letter-spacing:-0.120px;left:38.3px;">Leistung (UB)</div>
<svg class="b" style="left:17.8px;top:736.9px" width="15" height="15" viewBox="0 0 15 15"><defs><clipPath id="c1"><rect x="0" y="0" width="9.4" height="9"/></clipPath><clipPath id="c2"><rect x="0" y="0" width="8.9" height="8.6"/></clipPath></defs><g clip-path="url(#c1)"><path d="M-30.0 9.4 L-20.6 0" stroke="#1a2ea8" stroke-width="1.7"/><path d="M-27.0 9.4 L-17.6 0" stroke="#1a2ea8" stroke-width="1.7"/><path d="M-24.0 9.4 L-14.6 0" stroke="#1a2ea8" stroke-width="1.7"/><path d="M-21.0 9.4 L-11.6 0" stroke="#1a2ea8" stroke-width="1.7"/><path d="M-18.0 9.4 L-8.6 0" stroke="#1a2ea8" stroke-width="1.7"/><path d="M-15.0 9.4 L-5.6 0" stroke="#1a2ea8" stroke-width="1.7"/><path d="M-12.0 9.4 L-2.6 0" stroke="#1a2ea8" stroke-width="1.7"/><path d="M-9.0 9.4 L0.4 0" stroke="#1a2ea8" stroke-width="1.7"/><path d="M-6.0 9.4 L3.4 0" stroke="#1a2ea8" stroke-width="1.7"/><path d="M-3.0 9.4 L6.4 0" stroke="#1a2ea8" stroke-width="1.7"/><path d="M0.0 9.4 L9.4 0" stroke="#1a2ea8" stroke-width="1.7"/><path d="M3.0 9.4 L12.4 0" stroke="#1a2ea8" stroke-width="1.7"/><path d="M6.0 9.4 L15.4 0" stroke="#1a2ea8" stroke-width="1.7"/><path d="M9.0 9.4 L18.4 0" stroke="#1a2ea8" stroke-width="1.7"/><path d="M12.0 9.4 L21.4 0" stroke="#1a2ea8" stroke-width="1.7"/><path d="M15.0 9.4 L24.4 0" stroke="#1a2ea8" stroke-width="1.7"/><path d="M18.0 9.4 L27.4 0" stroke="#1a2ea8" stroke-width="1.7"/><path d="M21.0 9.4 L30.4 0" stroke="#1a2ea8" stroke-width="1.7"/><path d="M24.0 9.4 L33.4 0" stroke="#1a2ea8" stroke-width="1.7"/><path d="M27.0 9.4 L36.4 0" stroke="#1a2ea8" stroke-width="1.7"/><path d="M30.0 9.4 L39.4 0" stroke="#1a2ea8" stroke-width="1.7"/><path d="M33.0 9.4 L42.4 0" stroke="#1a2ea8" stroke-width="1.7"/></g><g transform="translate(5.5 5.4)"><rect width="8.9" height="8.6" fill="#fff"/><g clip-path="url(#c2)"><path d="M-30.0 9.4 L-20.6 0" stroke="#a01818" stroke-width="1.7"/><path d="M-27.0 9.4 L-17.6 0" stroke="#a01818" stroke-width="1.7"/><path d="M-24.0 9.4 L-14.6 0" stroke="#a01818" stroke-width="1.7"/><path d="M-21.0 9.4 L-11.6 0" stroke="#a01818" stroke-width="1.7"/><path d="M-18.0 9.4 L-8.6 0" stroke="#a01818" stroke-width="1.7"/><path d="M-15.0 9.4 L-5.6 0" stroke="#a01818" stroke-width="1.7"/><path d="M-12.0 9.4 L-2.6 0" stroke="#a01818" stroke-width="1.7"/><path d="M-9.0 9.4 L0.4 0" stroke="#a01818" stroke-width="1.7"/><path d="M-6.0 9.4 L3.4 0" stroke="#a01818" stroke-width="1.7"/><path d="M-3.0 9.4 L6.4 0" stroke="#a01818" stroke-width="1.7"/><path d="M0.0 9.4 L9.4 0" stroke="#a01818" stroke-width="1.7"/><path d="M3.0 9.4 L12.4 0" stroke="#a01818" stroke-width="1.7"/><path d="M6.0 9.4 L15.4 0" stroke="#a01818" stroke-width="1.7"/><path d="M9.0 9.4 L18.4 0" stroke="#a01818" stroke-width="1.7"/><path d="M12.0 9.4 L21.4 0" stroke="#a01818" stroke-width="1.7"/><path d="M15.0 9.4 L24.4 0" stroke="#a01818" stroke-width="1.7"/><path d="M18.0 9.4 L27.4 0" stroke="#a01818" stroke-width="1.7"/><path d="M21.0 9.4 L30.4 0" stroke="#a01818" stroke-width="1.7"/><path d="M24.0 9.4 L33.4 0" stroke="#a01818" stroke-width="1.7"/><path d="M27.0 9.4 L36.4 0" stroke="#a01818" stroke-width="1.7"/><path d="M30.0 9.4 L39.4 0" stroke="#a01818" stroke-width="1.7"/><path d="M33.0 9.4 L42.4 0" stroke="#a01818" stroke-width="1.7"/></g></g></svg>
<div class="t" style="top:735.8px;height:15px;line-height:15px;font-size:11px;color:#606060;letter-spacing:-0.067px;left:38.1px;">Tarifbaustein</div>
<svg class="b" style="left:17px;top:759.6px" width="16.5" height="16.5" viewBox="0 0 16.5 16.5"><path d="M0.3 0.3 H9 L0.3 8 Z" fill="#0a0a0a"/><path d="M9 0.3 V2.3 H6.8 V4.3 H4.6 V6.3 H2.4 V8 H0.3 L9 0.3 Z" fill="#d8a010"/><path d="M0.3 6 V8 H2.4 V6.3 Z" fill="#0a0a0a"/><path d="M12 0.5 H15.8 V9 H7.6 V6.2 H12 Z" fill="#8ea4e4" stroke="#0c1440" stroke-width="0.9"/><rect x="0.5" y="11.6" width="15.3" height="4.6" fill="#8ea4e4" stroke="#0c1440" stroke-width="0.9"/><path d="M2 13.9 H14.5" stroke="#4a62b8" stroke-width="1.6" stroke-dasharray="0.8 0.8"/><path d="M13.9 1.5 V8" stroke="#4a62b8" stroke-width="1.2" stroke-dasharray="0.8 0.8"/></svg>
<div class="t" style="top:759.7px;height:15px;line-height:15px;font-size:11px;color:#606060;letter-spacing:-0.015px;left:38.1px;">Werkstück</div>
<svg class="b" style="left:17px;top:782px" width="16" height="16" viewBox="0 0 16 16"><path d="M12.5 0.8 L14.2 2 L3.2 14.8 L2.2 14 Z" fill="#8a5a2a"/><path d="M5.5 7 L7 5.8 L14.8 13.2 L13.6 14.6 Z" fill="#7a3c12"/><path d="M0.6 5.2 C0.2 4.2 3.8 0.6 5.2 0.6 C6.4 0.8 8.8 3.2 8.6 4.2 C8.2 5.6 4.6 8.8 3.4 8.6 C2.4 8.4 1 6.4 0.6 5.2 Z" fill="#6e3612"/><path d="M1.6 4.6 C2.6 3.2 4 2 5.2 1.4" stroke="#a0643a" stroke-width="0.9" fill="none"/></svg>
<div class="t" style="top:781.8px;height:15px;line-height:15px;font-size:11px;color:#606060;letter-spacing:-0.148px;left:38.1px;">Bearbeitung</div>
<svg class="b" style="left:17px;top:813px" width="16" height="14" viewBox="0 0 16 14"><text x="0" y="12.8" font-family="Liberation Sans" font-weight="bold" font-size="17" fill="#e8a040" stroke="#dc9a3c" stroke-width="0.5" textLength="16" lengthAdjust="spacingAndGlyphs">%</text></svg>
<div class="t" style="top:811.7px;height:15px;line-height:15px;font-size:11px;color:#606060;letter-spacing:-0.238px;left:38.1px;">Prozent Position</div>
<svg class="b" style="left:17px;top:835px" width="16" height="15" viewBox="0 0 16 15"><path d="M0.5 0.5 H14 L15 4 H14 C13.5 2.2 13 1.8 11 1.8 H4 L9.5 7.3 L3.5 13 H11.5 C13.5 13 14.2 12.3 14.8 10.5 H15.8 L14.5 14.7 H0.5 V13.8 L6.8 7.6 L0.5 1.4 Z" fill="#000" stroke="#000" stroke-width="0.7" stroke-linejoin="round"/></svg>
<div class="t" style="top:833.5px;height:15px;line-height:15px;font-size:11px;color:#606060;letter-spacing:-0.002px;left:38.1px;">Zwischensumme</div>
<svg class="b" style="left:17px;top:856.6px" width="16" height="15" viewBox="0 0 16 15"><path d="M0.5 0.5 H14 L15 4 H14 C13.5 2.2 13 1.8 11 1.8 H4 L9.5 7.3 L3.5 13 H11.5 C13.5 13 14.2 12.3 14.8 10.5 H15.8 L14.5 14.7 H0.5 V13.8 L6.8 7.6 L0.5 1.4 Z" fill="#000" stroke="#000" stroke-width="0.7" stroke-linejoin="round"/></svg>
<div class="t" style="top:855.7px;height:15px;line-height:15px;font-size:11px;color:#606060;letter-spacing:-0.332px;left:38.1px;">Titelsumme bilden</div>
<div class="b" style="left:136px;top:303px;width:16px;height:707px;background:#e6e6e6;"></div>
<div class="b" style="left:136px;top:303px;width:1px;height:707px;background:#a6a6a6;"></div>
<div class="b" style="left:151px;top:303px;width:1px;height:707px;background:#a6a6a6;"></div>
<div class="b" style="left:137px;top:303px;width:14px;height:1px;background:#a6a6a6;"></div>
<div class="b" style="left:137px;top:1009px;width:14px;height:1px;background:#a6a6a6;"></div>
<div class="b" style="left:137px;top:655px;width:14px;height:1px;background:#a6a6a6;"></div>
<div class="b" style="left:137px;top:656px;width:14px;height:1px;background:#fff;"></div>
<div class="b" style="left:137px;top:657px;width:14px;height:1px;background:#a6a6a6;"></div>
<div class="b" style="left:137px;top:304px;width:1px;height:351px;background:#f6f6f6;"></div>
<div class="b" style="left:137px;top:658px;width:1px;height:350px;background:#f6f6f6;"></div>
<svg class="b" style="left:140.5px;top:478px" width="6" height="3.5" viewBox="0 0 6 3.5"><path d="M0 3.5 L3 0 L6 3.5 Z" fill="#000"/></svg>
<svg class="b" style="left:140.5px;top:832px" width="6" height="3.5" viewBox="0 0 6 3.5"><path d="M0 0 L3 3.5 L6 0 Z" fill="#000"/></svg>
<div class="b" style="left:152px;top:302px;width:1386px;height:707px;background:#fff;"></div>
<div class="b" style="left:152px;top:302px;width:1386px;height:1px;background:#b9b9b9;"></div>
<div class="b" style="left:152px;top:303px;width:1386px;height:1px;background:#8c8c8c;"></div>
<div class="b" style="left:152px;top:302px;width:1px;height:707px;background:#c4c4c4;"></div>
<div class="b" style="left:153px;top:303px;width:1px;height:706px;background:#8c8c8c;"></div>
<div class="b" style="left:154px;top:304px;width:1384px;height:17px;background:linear-gradient(#c6c8da,#b2b4c8 60%,#a9abc2);"></div>
<div class="b" style="left:154px;top:321px;width:1384px;height:1px;background:#9c9eb4;"></div>
<div class="b" style="left:154px;top:304px;width:1384px;height:17px;overflow:hidden">
<div class="t" style="left:396px;top:2.5px;font-size:13px;line-height:16px;letter-spacing:-0.03px">Auftrag [212012] -&gt; Kostenvoranschlag [HW-212325] -&gt; Kunde [I</div>
<div class="t" style="left:966px;top:2.5px;font-size:13px;line-height:16px">Ro]</div>
<svg class="b" style="left:767.5px;top:0" width="206" height="17" shape-rendering="crispEdges"><path d="M12 4 L60 1.5 L100 0 H160 L205 2 L187 4 Z" fill="#a3a6ba" opacity="0.75"/><rect x="0" y="4" width="7" height="7" fill="#9aa0b2"/><rect x="0" y="11" width="7" height="7" fill="#a5a4b8"/><rect x="7" y="4" width="7" height="7" fill="#95909c"/><rect x="7" y="11" width="7" height="7" fill="#8c8a9a"/><rect x="14" y="4" width="7" height="7" fill="#a09fb4"/><rect x="14" y="11" width="7" height="7" fill="#a9a8ba"/><rect x="21" y="4" width="7" height="7" fill="#a09fb4"/><rect x="21" y="11" width="7" height="7" fill="#9494a6"/><rect x="28" y="4" width="7" height="7" fill="#a8a6b6"/><rect x="28" y="11" width="7" height="7" fill="#a9a8ba"/><rect x="35" y="4" width="7" height="7" fill="#a29fb0"/><rect x="35" y="11" width="7" height="7" fill="#9b9aac"/><rect x="42" y="4" width="7" height="7" fill="#a3a2b4"/><rect x="42" y="11" width="7" height="7" fill="#a5a4b8"/><rect x="49" y="4" width="7" height="7" fill="#8f8c9c"/><rect x="49" y="11" width="7" height="7" fill="#9494a6"/><rect x="56" y="4" width="7" height="7" fill="#aeabbc"/><rect x="56" y="11" width="7" height="7" fill="#a9a8ba"/><rect x="63" y="4" width="7" height="7" fill="#a29fb0"/><rect x="63" y="11" width="7" height="7" fill="#a5a4b8"/><rect x="70" y="4" width="7" height="7" fill="#95909c"/><rect x="70" y="11" width="7" height="7" fill="#9796a8"/><rect x="77" y="4" width="7" height="7" fill="#a29fb0"/><rect x="77" y="11" width="7" height="7" fill="#9e9db0"/><rect x="84" y="4" width="7" height="7" fill="#a8a6b6"/><rect x="84" y="11" width="7" height="7" fill="#9796a8"/><rect x="91" y="4" width="7" height="7" fill="#8f8c9c"/><rect x="91" y="11" width="7" height="7" fill="#9e9db0"/><rect x="98" y="4" width="7" height="7" fill="#a29fb0"/><rect x="98" y="11" width="7" height="7" fill="#9494a6"/><rect x="105" y="4" width="7" height="7" fill="#8f8c9c"/><rect x="105" y="11" width="7" height="7" fill="#a2a1b4"/><rect x="112" y="4" width="7" height="7" fill="#a29fb0"/><rect x="112" y="11" width="7" height="7" fill="#9796a8"/><rect x="119" y="4" width="7" height="7" fill="#9aa0b2"/><rect x="119" y="11" width="7" height="7" fill="#9e9db0"/><rect x="126" y="4" width="7" height="7" fill="#95909c"/><rect x="126" y="11" width="7" height="7" fill="#9796a8"/><rect x="133" y="4" width="7" height="7" fill="#9aa0b2"/><rect x="133" y="11" width="7" height="7" fill="#9494a6"/><rect x="140" y="4" width="7" height="7" fill="#a29fb0"/><rect x="140" y="11" width="7" height="7" fill="#9796a8"/><rect x="147" y="4" width="7" height="7" fill="#aeabbc"/><rect x="147" y="11" width="7" height="7" fill="#a2a1b4"/><rect x="154" y="4" width="7" height="7" fill="#aeabbc"/><rect x="154" y="11" width="7" height="7" fill="#a9a8ba"/><rect x="161" y="4" width="7" height="7" fill="#9c9bae"/><rect x="161" y="11" width="7" height="7" fill="#a2a1b4"/><rect x="168" y="4" width="7" height="7" fill="#8f8c9c"/><rect x="168" y="11" width="7" height="7" fill="#9796a8"/><rect x="175" y="4" width="7" height="7" fill="#a8a6b6"/><rect x="175" y="11" width="7" height="7" fill="#a5a4b8"/></svg>
</div>
<div class="b" style="left:154px;top:322px;width:1366px;height:59px;background:#fff;"></div>
<div class="b" style="left:167px;top:322px;width:1px;height:59px;background:#e4e4e4;"></div>
<div class="b" style="left:1062px;top:322px;width:1px;height:21px;background:#e4e4e4;"></div>
<div class="b" style="left:1437px;top:322px;width:1px;height:21px;background:#e4e4e4;"></div>
<div class="b" style="left:267px;top:344px;width:1px;height:37px;background:#e4e4e4;"></div>
<div class="b" style="left:367px;top:344px;width:1px;height:37px;background:#e4e4e4;"></div>
<div class="b" style="left:392px;top:344px;width:1px;height:37px;background:#e4e4e4;"></div>
<div class="b" style="left:417px;top:344px;width:1px;height:37px;background:#e4e4e4;"></div>
<div class="b" style="left:497px;top:344px;width:1px;height:37px;background:#e4e4e4;"></div>
<div class="b" style="left:537px;top:344px;width:1px;height:37px;background:#e4e4e4;"></div>
<div class="b" style="left:867px;top:344px;width:1px;height:37px;background:#e4e4e4;"></div>
<div class="b" style="left:912px;top:344px;width:1px;height:37px;background:#e4e4e4;"></div>
<div class="b" style="left:987px;top:344px;width:1px;height:37px;background:#e4e4e4;"></div>
<div class="b" style="left:1062px;top:344px;width:1px;height:37px;background:#e4e4e4;"></div>
<div class="b" style="left:1092px;top:344px;width:1px;height:37px;background:#e4e4e4;"></div>
<div class="b" style="left:1122px;top:344px;width:1px;height:37px;background:#e4e4e4;"></div>
<div class="b" style="left:1152px;top:344px;width:1px;height:37px;background:#e4e4e4;"></div>
<div class="b" style="left:1182px;top:344px;width:1px;height:37px;background:#e4e4e4;"></div>
<div class="b" style="left:1227px;top:344px;width:1px;height:37px;background:#e4e4e4;"></div>
<div class="b" style="left:1257px;top:344px;width:1px;height:37px;background:#e4e4e4;"></div>
<div class="b" style="left:1347px;top:344px;width:1px;height:37px;background:#e4e4e4;"></div>
<div class="b" style="left:1437px;top:344px;width:1px;height:37px;background:#e4e4e4;"></div>
<div class="t" style="top:324.0px;height:17px;line-height:17px;font-size:13px;color:#000;letter-spacing:0.009px;left:560.0px;">Positionserfassung</div>
<div class="t" style="top:324.0px;height:17px;line-height:17px;font-size:13px;color:#000;letter-spacing:-0.030px;left:1209.0px;">Eigenschaften</div>
<div class="t" style="top:346.1px;height:17px;line-height:17px;font-size:13px;color:#000;letter-spacing:0.219px;left:171px;">Pos. [Auto]</div>
<div class="t" style="top:346.1px;height:17px;line-height:17px;font-size:13px;color:#000;letter-spacing:-0.371px;left:271px;">Nr.</div>
<svg class="b" style="left:370.8px;top:346px" width="16" height="16" viewBox="0 0 16 16"><path d="M0 0 L16 16 H0 Z" fill="#1c1c1c"/><path d="M3 6.6 L9.3 13 H3 Z" fill="#fff"/><path d="M2.2 14.6 V16 M4.2 14.6 V16 M6.2 14.6 V16 M8.2 14.6 V16 M10.2 14.6 V16" stroke="#fff" stroke-width="0.9"/><path d="M12.2 2.2 L14.6 4.4 L6.4 12.4 L4.2 12.9 L4.4 10.4 Z" fill="#8a8a8a"/><path d="M12.2 2.2 L14.6 4.4 L13.2 5.8 L10.8 3.6 Z" fill="#222"/><path d="M4.4 10.4 L6.4 12.4 L4.2 12.9 Z" fill="#333"/><path d="M7 7 L10 10" stroke="#1c1c1c" stroke-width="2.4"/></svg>
<div class="t" style="top:346.1px;height:17px;line-height:17px;font-size:13px;color:#000;letter-spacing:-0.014px;left:396px;">ca.</div>
<div class="t" style="top:346.1px;height:17px;line-height:17px;font-size:13px;color:#000;letter-spacing:-0.290px;right:1425.69px;">Menge</div>
<div class="t" style="top:346.1px;height:17px;line-height:17px;font-size:13px;color:#000;letter-spacing:0.149px;left:501px;">ME</div>
<div class="t" style="top:346.1px;height:17px;line-height:17px;font-size:13px;color:#000;letter-spacing:0.079px;left:541px;">Leistungstext [ 1 ] Original</div>
<div class="t" style="top:346.1px;height:17px;line-height:17px;font-size:13px;color:#000;letter-spacing:-0.134px;left:871.5px;">Rabatt</div>
<div class="t" style="top:346.1px;height:17px;line-height:17px;font-size:13px;color:#000;letter-spacing:-0.017px;right:935.52px;">E-Preis</div>
<div class="t" style="top:346.1px;height:17px;line-height:17px;font-size:13px;color:#000;letter-spacing:-0.009px;right:860.51px;">G-Preis</div>
<div class="t" style="top:346.1px;height:17px;line-height:17px;font-size:13px;color:#000;letter-spacing:-0.024px;left:1068.5px;">n/a</div>
<div class="t" style="top:346.1px;height:17px;line-height:17px;font-size:13px;color:#000;letter-spacing:0.110px;left:1099.8px;">n/r</div>
<div class="t" style="top:346.1px;height:17px;line-height:17px;font-size:13px;color:#000;letter-spacing:-0.115px;left:1131.2px;">1x</div>
<div class="t" style="top:346.1px;height:17px;line-height:17px;font-size:13px;color:#000;letter-spacing:0.049px;left:1159.5px;">SL</div>
<div class="t" style="top:346.1px;height:17px;line-height:17px;font-size:13px;color:#000;letter-spacing:0.175px;left:1189.8px;">n/Sk.</div>
<div class="t" style="top:346.1px;height:17px;line-height:17px;font-size:13px;color:#000;letter-spacing:0.304px;left:1232.0px;">i.B.</div>
<div class="t" style="top:346.1px;height:17px;line-height:17px;font-size:13px;color:#000;letter-spacing:0.124px;left:1262.8px;">Best. Kreditor</div>
<div class="t" style="top:346.1px;height:17px;line-height:17px;font-size:13px;color:#000;letter-spacing:0.091px;left:1355.0px;">Lief. Wunsch</div>
<div class="t" style="top:346.1px;height:17px;line-height:17px;font-size:13px;color:#000;letter-spacing:0.164px;left:1453.5px;">Erlös Kto.</div>
<div class="b" style="left:0;top:381px;width:1920px;height:611px;overflow:hidden">
<div class="b" style="left:154px;top:0px;width:13px;height:34px;background:#f0f0f0;"></div>
<div class="b" style="left:154px;top:33px;width:13px;height:1px;background:#d9d9d9;"></div>
<div class="b" style="left:167px;top:0px;width:1px;height:34px;background:#e0e0e0;"></div>
<div class="b" style="left:168px;top:0px;width:894px;height:34px;background:#e0faff;"></div>
<div class="b" style="left:1062px;top:0px;width:458px;height:34px;background:#ffc0c0;"></div>
<div class="b" style="left:168px;top:33px;width:894px;height:1px;background:#e9e9e9;"></div>
<div class="b" style="left:267px;top:0px;width:1px;height:34px;background:#dfeaec;"></div>
<div class="b" style="left:367px;top:0px;width:1px;height:34px;background:#dfeaec;"></div>
<div class="b" style="left:392px;top:0px;width:1px;height:34px;background:#dfeaec;"></div>
<div class="b" style="left:417px;top:0px;width:1px;height:34px;background:#dfeaec;"></div>
<div class="b" style="left:497px;top:0px;width:1px;height:34px;background:#dfeaec;"></div>
<div class="b" style="left:537px;top:0px;width:1px;height:34px;background:#dfeaec;"></div>
<div class="b" style="left:867px;top:0px;width:1px;height:34px;background:#dfeaec;"></div>
<div class="b" style="left:912px;top:0px;width:1px;height:34px;background:#dfeaec;"></div>
<div class="b" style="left:987px;top:0px;width:1px;height:34px;background:#dfeaec;"></div>
<div class="b" style="left:1062px;top:33px;width:458px;height:1px;background:#ececec;"></div>
<div class="b" style="left:1062px;top:0px;width:1px;height:34px;background:#ececec;"></div>
<div class="b" style="left:1092px;top:0px;width:1px;height:34px;background:#ececec;"></div>
<div class="b" style="left:1122px;top:0px;width:1px;height:34px;background:#ececec;"></div>
<div class="b" style="left:1152px;top:0px;width:1px;height:34px;background:#ececec;"></div>
<div class="b" style="left:1182px;top:0px;width:1px;height:34px;background:#ececec;"></div>
<div class="b" style="left:1227px;top:0px;width:1px;height:34px;background:#ececec;"></div>
<div class="b" style="left:1257px;top:0px;width:1px;height:34px;background:#ececec;"></div>
<div class="b" style="left:1347px;top:0px;width:1px;height:34px;background:#ececec;"></div>
<div class="b" style="left:1437px;top:0px;width:1px;height:34px;background:#ececec;"></div>
<div class="t" style="top:1.0px;height:17px;line-height:17px;font-size:13px;color:#000;font-weight:bold;left:171px;max-width:96px;overflow:hidden;">1</div>
<div class="t" style="top:1.0px;height:17px;line-height:17px;font-size:13px;color:#000;left:270px;"></div>
<div class="b" style="left:398px;top:2px;width:13px;height:13px;background:#fff;border:1px solid #333;box-sizing:border-box;"></div>
<div class="b" style="left:1070px;top:2px;width:13px;height:13px;background:#fff;border:1px solid #333;box-sizing:border-box;"></div>
<div class="b" style="left:1100px;top:2px;width:13px;height:13px;background:#fff;border:1px solid #333;box-sizing:border-box;"></div>
<div class="b" style="left:1130px;top:2px;width:13px;height:13px;background:#fff;border:1px solid #333;box-sizing:border-box;"></div>
<div class="b" style="left:1160px;top:2px;width:13px;height:13px;background:#fff;border:1px solid #333;box-sizing:border-box;"></div>
<div class="b" style="left:1198px;top:2px;width:13px;height:13px;background:#fff;border:1px solid #333;box-sizing:border-box;"></div>
<div class="b" style="left:1235px;top:2px;width:13px;height:13px;background:#fff;border:1px solid #333;box-sizing:border-box;"></div>
<div class="t" style="top:1.0px;height:17px;line-height:17px;font-size:13px;color:#000;left:500px;"></div>
<div class="t" style="top:1.0px;height:17px;line-height:17px;font-size:13px;color:#000;font-weight:bold;letter-spacing:0.095px;left:540px;">Vorbereiten des Untergrundes</div>
<div class="b" style="left:1381px;top:12px;width:2.3px;height:2px;background:#0a0a14;"></div>
<div class="b" style="left:1393px;top:12px;width:2.3px;height:2px;background:#0a0a14;"></div>
<div class="b" style="left:154px;top:34px;width:13px;height:99px;background:#f0f0f0;"></div>
<div class="b" style="left:154px;top:132px;width:13px;height:1px;background:#d9d9d9;"></div>
<div class="b" style="left:167px;top:34px;width:1px;height:99px;background:#e0e0e0;"></div>
<div class="b" style="left:168px;top:34px;width:894px;height:99px;background:#fff;"></div>
<div class="b" style="left:1062px;top:34px;width:458px;height:99px;background:#ffc0c0;"></div>
<div class="b" style="left:168px;top:132px;width:894px;height:1px;background:#e9e9e9;"></div>
<div class="b" style="left:267px;top:34px;width:1px;height:99px;background:#e9e9e9;"></div>
<div class="b" style="left:367px;top:34px;width:1px;height:99px;background:#e9e9e9;"></div>
<div class="b" style="left:392px;top:34px;width:1px;height:99px;background:#e9e9e9;"></div>
<div class="b" style="left:417px;top:34px;width:1px;height:99px;background:#e9e9e9;"></div>
<div class="b" style="left:497px;top:34px;width:1px;height:99px;background:#e9e9e9;"></div>
<div class="b" style="left:537px;top:34px;width:1px;height:99px;background:#e9e9e9;"></div>
<div class="b" style="left:867px;top:34px;width:1px;height:99px;background:#e9e9e9;"></div>
<div class="b" style="left:912px;top:34px;width:1px;height:99px;background:#e9e9e9;"></div>
<div class="b" style="left:987px;top:34px;width:1px;height:99px;background:#e9e9e9;"></div>
<div class="b" style="left:1062px;top:132px;width:458px;height:1px;background:#ececec;"></div>
<div class="b" style="left:1062px;top:34px;width:1px;height:99px;background:#ececec;"></div>
<div class="b" style="left:1092px;top:34px;width:1px;height:99px;background:#ececec;"></div>
<div class="b" style="left:1122px;top:34px;width:1px;height:99px;background:#ececec;"></div>
<div class="b" style="left:1152px;top:34px;width:1px;height:99px;background:#ececec;"></div>
<div class="b" style="left:1182px;top:34px;width:1px;height:99px;background:#ececec;"></div>
<div class="b" style="left:1227px;top:34px;width:1px;height:99px;background:#ececec;"></div>
<div class="b" style="left:1257px;top:34px;width:1px;height:99px;background:#ececec;"></div>
<div class="b" style="left:1347px;top:34px;width:1px;height:99px;background:#ececec;"></div>
<div class="b" style="left:1437px;top:34px;width:1px;height:99px;background:#ececec;"></div>
<div class="t" style="top:34.5px;height:17px;line-height:17px;font-size:13px;color:#000;letter-spacing:-0.394px;left:171px;max-width:96px;overflow:hidden;">1.0001</div>
<div class="t" style="top:34.5px;height:17px;line-height:17px;font-size:13px;color:#000;letter-spacing:-0.253px;left:270px;">aus</div>
<div class="b" style="left:398px;top:36px;width:13px;height:13px;background:#fff;border:1px solid #333;box-sizing:border-box;"></div>
<div class="b" style="left:1070px;top:36px;width:13px;height:13px;background:#fff;border:1px solid #333;box-sizing:border-box;"></div>
<div class="b" style="left:1100px;top:36px;width:13px;height:13px;background:#fff;border:1px solid #333;box-sizing:border-box;"></div>
<div class="b" style="left:1130px;top:36px;width:13px;height:13px;background:#fff;border:1px solid #333;box-sizing:border-box;"></div>
<div class="b" style="left:1160px;top:36px;width:13px;height:13px;background:#fff;border:1px solid #333;box-sizing:border-box;"></div>
<div class="b" style="left:1198px;top:36px;width:13px;height:13px;background:#fff;border:1px solid #333;box-sizing:border-box;"></div>
<div class="b" style="left:1235px;top:36px;width:13px;height:13px;background:#fff;border:1px solid #333;box-sizing:border-box;"></div>
<div class="t" style="top:34.5px;height:17px;line-height:17px;font-size:13px;color:#000;letter-spacing:-0.227px;right:1425.23px;">20,000</div>
<div class="t" style="top:34.5px;height:17px;line-height:17px;font-size:13px;color:#000;letter-spacing:-0.330px;left:500px;">m²</div>
<div class="t" style="top:34.5px;height:17px;line-height:17px;font-size:13px;color:#000;letter-spacing:0.008px;left:540px;">bisheriger Wirtschaftsraum</div>
<div class="t" style="top:50.5px;height:17px;line-height:17px;font-size:13px;color:#000;letter-spacing:-0.075px;left:540px;">Ausgleichen</div>
<div class="t" style="top:66.5px;height:17px;line-height:17px;font-size:13px;color:#000;letter-spacing:-0.112px;left:540px;">Untergrund für die Verlegung von Wandfliesen durch</div>
<div class="t" style="top:82.5px;height:17px;line-height:17px;font-size:13px;color:#000;letter-spacing:-0.087px;left:540px;">spachteln von Unebenheiten ausgleichen.</div>
<div class="t" style="top:98.5px;height:17px;line-height:17px;font-size:13px;color:#000;letter-spacing:-0.025px;left:540px;">Dicke &nbsp; &nbsp; &nbsp; &nbsp; &nbsp; &nbsp; &nbsp; &nbsp; &nbsp; &nbsp; &nbsp;: bis 1,5 mm</div>
<div class="t" style="top:114.5px;height:17px;line-height:17px;font-size:13px;color:#000;letter-spacing:-0.012px;left:540px;">Angeb.Fabrikat :</div>
<div class="t" style="top:34.5px;height:17px;line-height:17px;font-size:13px;color:#000;letter-spacing:-0.346px;right:935.35px;">17,40</div>
<div class="t" style="top:34.5px;height:17px;line-height:17px;font-size:13px;color:#000;letter-spacing:-0.294px;right:860.29px;">348,00</div>
<div class="t" style="top:34.5px;height:17px;line-height:17px;font-size:13px;color:#000;letter-spacing:-0.330px;left:1468.2px;">8400</div>
<div class="b" style="left:1381.3px;top:47px;width:1.6px;height:1px;background:#4a4a5a;"></div>
<div class="b" style="left:1393.3px;top:47px;width:1.6px;height:1px;background:#4a4a5a;"></div>
<div class="b" style="left:154px;top:133px;width:13px;height:51px;background:#f0f0f0;"></div>
<div class="b" style="left:154px;top:183px;width:13px;height:1px;background:#d9d9d9;"></div>
<div class="b" style="left:167px;top:133px;width:1px;height:51px;background:#e0e0e0;"></div>
<div class="b" style="left:168px;top:133px;width:894px;height:51px;background:#e0faff;"></div>
<div class="b" style="left:1062px;top:133px;width:458px;height:51px;background:#ffc0c0;"></div>
<div class="b" style="left:168px;top:183px;width:894px;height:1px;background:#e9e9e9;"></div>
<div class="b" style="left:267px;top:133px;width:1px;height:51px;background:#dfeaec;"></div>
<div class="b" style="left:367px;top:133px;width:1px;height:51px;background:#dfeaec;"></div>
<div class="b" style="left:392px;top:133px;width:1px;height:51px;background:#dfeaec;"></div>
<div class="b" style="left:417px;top:133px;width:1px;height:51px;background:#dfeaec;"></div>
<div class="b" style="left:497px;top:133px;width:1px;height:51px;background:#dfeaec;"></div>
<div class="b" style="left:537px;top:133px;width:1px;height:51px;background:#dfeaec;"></div>
<div class="b" style="left:867px;top:133px;width:1px;height:51px;background:#dfeaec;"></div>
<div class="b" style="left:912px;top:133px;width:1px;height:51px;background:#dfeaec;"></div>
<div class="b" style="left:987px;top:133px;width:1px;height:51px;background:#dfeaec;"></div>
<div class="b" style="left:1062px;top:183px;width:458px;height:1px;background:#ececec;"></div>
<div class="b" style="left:1062px;top:133px;width:1px;height:51px;background:#ececec;"></div>
<div class="b" style="left:1092px;top:133px;width:1px;height:51px;background:#ececec;"></div>
<div class="b" style="left:1122px;top:133px;width:1px;height:51px;background:#ececec;"></div>
<div class="b" style="left:1152px;top:133px;width:1px;height:51px;background:#ececec;"></div>
<div class="b" style="left:1182px;top:133px;width:1px;height:51px;background:#ececec;"></div>
<div class="b" style="left:1227px;top:133px;width:1px;height:51px;background:#ececec;"></div>
<div class="b" style="left:1257px;top:133px;width:1px;height:51px;background:#ececec;"></div>
<div class="b" style="left:1347px;top:133px;width:1px;height:51px;background:#ececec;"></div>
<div class="b" style="left:1437px;top:133px;width:1px;height:51px;background:#ececec;"></div>
<div class="t" style="top:133.5px;height:17px;line-height:17px;font-size:13px;color:#000;letter-spacing:-0.394px;left:171px;max-width:96px;overflow:hidden;">1.0002</div>
<div class="t" style="top:133.5px;height:17px;line-height:17px;font-size:13px;color:#000;letter-spacing:-0.430px;left:270px;">10317</div>
<div class="b" style="left:398px;top:135px;width:13px;height:13px;background:#fff;border:1px solid #333;box-sizing:border-box;"></div>
<div class="b" style="left:1070px;top:135px;width:13px;height:13px;background:#fff;border:1px solid #333;box-sizing:border-box;"></div>
<div class="b" style="left:1100px;top:135px;width:13px;height:13px;background:#fff;border:1px solid #333;box-sizing:border-box;"></div>
<div class="b" style="left:1130px;top:135px;width:13px;height:13px;background:#fff;border:1px solid #333;box-sizing:border-box;"></div>
<div class="b" style="left:1160px;top:135px;width:13px;height:13px;background:#fff;border:1px solid #333;box-sizing:border-box;"></div>
<div class="b" style="left:1198px;top:135px;width:13px;height:13px;background:#fff;border:1px solid #333;box-sizing:border-box;"></div>
<div class="b" style="left:1235px;top:135px;width:13px;height:13px;background:#fff;border:1px solid #333;box-sizing:border-box;"></div>
<div class="t" style="top:133.5px;height:17px;line-height:17px;font-size:13px;color:#000;letter-spacing:-0.227px;right:1425.23px;">20,000</div>
<div class="t" style="top:133.5px;height:17px;line-height:17px;font-size:13px;color:#000;letter-spacing:-0.330px;left:500px;">m²</div>
<div class="t" style="top:133.5px;height:17px;line-height:17px;font-size:13px;color:#000;letter-spacing:0.008px;left:540px;">bisheriger Wirtschaftsraum</div>
<div class="t" style="top:149.5px;height:17px;line-height:17px;font-size:13px;color:#000;letter-spacing:0.004px;left:540px;">Boden mit Nivelliermasse bis 10 mm ebenspachteln</div>
<div class="t" style="top:165.5px;height:17px;line-height:17px;font-size:13px;color:#000;letter-spacing:0.011px;left:540px;">(Verbrauch ca.1,6kg/mm/m²)</div>
<div class="t" style="top:133.5px;height:17px;line-height:17px;font-size:13px;color:#000;letter-spacing:-0.346px;right:935.35px;">12,00</div>
<div class="t" style="top:133.5px;height:17px;line-height:17px;font-size:13px;color:#000;letter-spacing:-0.294px;right:860.29px;">240,00</div>
<div class="t" style="top:133.5px;height:17px;line-height:17px;font-size:13px;color:#000;letter-spacing:-0.330px;left:1468.2px;">8400</div>
<div class="b" style="left:1381.3px;top:146px;width:1.6px;height:1px;background:#4a4a5a;"></div>
<div class="b" style="left:1393.3px;top:146px;width:1.6px;height:1px;background:#4a4a5a;"></div>
<div class="b" style="left:154px;top:184px;width:13px;height:35px;background:#f0f0f0;"></div>
<div class="b" style="left:154px;top:218px;width:13px;height:1px;background:#d9d9d9;"></div>
<div class="b" style="left:167px;top:184px;width:1px;height:35px;background:#e0e0e0;"></div>
<div class="b" style="left:168px;top:184px;width:894px;height:35px;background:#fff;"></div>
<div class="b" style="left:1062px;top:184px;width:458px;height:35px;background:#ffc0c0;"></div>
<div class="b" style="left:168px;top:218px;width:894px;height:1px;background:#e9e9e9;"></div>
<div class="b" style="left:267px;top:184px;width:1px;height:35px;background:#e9e9e9;"></div>
<div class="b" style="left:367px;top:184px;width:1px;height:35px;background:#e9e9e9;"></div>
<div class="b" style="left:392px;top:184px;width:1px;height:35px;background:#e9e9e9;"></div>
<div class="b" style="left:417px;top:184px;width:1px;height:35px;background:#e9e9e9;"></div>
<div class="b" style="left:497px;top:184px;width:1px;height:35px;background:#e9e9e9;"></div>
<div class="b" style="left:537px;top:184px;width:1px;height:35px;background:#e9e9e9;"></div>
<div class="b" style="left:867px;top:184px;width:1px;height:35px;background:#e9e9e9;"></div>
<div class="b" style="left:912px;top:184px;width:1px;height:35px;background:#e9e9e9;"></div>
<div class="b" style="left:987px;top:184px;width:1px;height:35px;background:#e9e9e9;"></div>
<div class="b" style="left:1062px;top:218px;width:458px;height:1px;background:#ececec;"></div>
<div class="b" style="left:1062px;top:184px;width:1px;height:35px;background:#ececec;"></div>
<div class="b" style="left:1092px;top:184px;width:1px;height:35px;background:#ececec;"></div>
<div class="b" style="left:1122px;top:184px;width:1px;height:35px;background:#ececec;"></div>
<div class="b" style="left:1152px;top:184px;width:1px;height:35px;background:#ececec;"></div>
<div class="b" style="left:1182px;top:184px;width:1px;height:35px;background:#ececec;"></div>
<div class="b" style="left:1227px;top:184px;width:1px;height:35px;background:#ececec;"></div>
<div class="b" style="left:1257px;top:184px;width:1px;height:35px;background:#ececec;"></div>
<div class="b" style="left:1347px;top:184px;width:1px;height:35px;background:#ececec;"></div>
<div class="b" style="left:1437px;top:184px;width:1px;height:35px;background:#ececec;"></div>
<div class="t" style="top:184.5px;height:17px;line-height:17px;font-size:13px;color:#000;letter-spacing:-0.394px;left:171px;max-width:96px;overflow:hidden;">1.0003</div>
<div class="t" style="top:184.5px;height:17px;line-height:17px;font-size:13px;color:#000;letter-spacing:-0.430px;left:270px;">ab</div>
<div class="b" style="left:398px;top:186px;width:13px;height:13px;background:#fff;border:1px solid #333;box-sizing:border-box;"></div>
<div class="b" style="left:1070px;top:186px;width:13px;height:13px;background:#fff;border:1px solid #333;box-sizing:border-box;"></div>
<div class="b" style="left:1100px;top:186px;width:13px;height:13px;background:#fff;border:1px solid #333;box-sizing:border-box;"></div>
<div class="b" style="left:1130px;top:186px;width:13px;height:13px;background:#fff;border:1px solid #333;box-sizing:border-box;"></div>
<div class="b" style="left:1160px;top:186px;width:13px;height:13px;background:#fff;border:1px solid #333;box-sizing:border-box;"></div>
<div class="b" style="left:1198px;top:186px;width:13px;height:13px;background:#fff;border:1px solid #333;box-sizing:border-box;"></div>
<div class="b" style="left:1235px;top:186px;width:13px;height:13px;background:#fff;border:1px solid #333;box-sizing:border-box;"></div>
<div class="t" style="top:184.5px;height:17px;line-height:17px;font-size:13px;color:#000;letter-spacing:-0.328px;right:1425.33px;">120,000</div>
<div class="t" style="top:184.5px;height:17px;line-height:17px;font-size:13px;color:#000;letter-spacing:-0.330px;left:500px;">m²</div>
<div class="t" style="top:184.5px;height:17px;line-height:17px;font-size:13px;color:#000;letter-spacing:-0.007px;left:540px;">AE-Entkopplungs-und Abdichtungssbahn mit</div>
<div class="t" style="top:200.5px;height:17px;line-height:17px;font-size:13px;color:#000;letter-spacing:-0.054px;left:540px;">schnellabbindenden Flexkleber einkleben</div>
<div class="t" style="top:184.5px;height:17px;line-height:17px;font-size:13px;color:#000;letter-spacing:-0.346px;right:935.35px;">38,25</div>
<div class="t" style="top:184.5px;height:17px;line-height:17px;font-size:13px;color:#000;letter-spacing:-0.101px;right:860.10px;">4.590,00</div>
<div class="t" style="top:184.5px;height:17px;line-height:17px;font-size:13px;color:#000;letter-spacing:-0.330px;left:1468.2px;">8337</div>
<div class="b" style="left:1381.3px;top:197px;width:1.6px;height:1px;background:#4a4a5a;"></div>
<div class="b" style="left:1393.3px;top:197px;width:1.6px;height:1px;background:#4a4a5a;"></div>
<div class="b" style="left:154px;top:219px;width:13px;height:115px;background:#f0f0f0;"></div>
<div class="b" style="left:154px;top:333px;width:13px;height:1px;background:#d9d9d9;"></div>
<div class="b" style="left:167px;top:219px;width:1px;height:115px;background:#e0e0e0;"></div>
<div class="b" style="left:168px;top:219px;width:894px;height:115px;background:#e0faff;"></div>
<div class="b" style="left:1062px;top:219px;width:458px;height:115px;background:#ffc0c0;"></div>
<div class="b" style="left:168px;top:333px;width:894px;height:1px;background:#e9e9e9;"></div>
<div class="b" style="left:267px;top:219px;width:1px;height:115px;background:#dfeaec;"></div>
<div class="b" style="left:367px;top:219px;width:1px;height:115px;background:#dfeaec;"></div>
<div class="b" style="left:392px;top:219px;width:1px;height:115px;background:#dfeaec;"></div>
<div class="b" style="left:417px;top:219px;width:1px;height:115px;background:#dfeaec;"></div>
<div class="b" style="left:497px;top:219px;width:1px;height:115px;background:#dfeaec;"></div>
<div class="b" style="left:537px;top:219px;width:1px;height:115px;background:#dfeaec;"></div>
<div class="b" style="left:867px;top:219px;width:1px;height:115px;background:#dfeaec;"></div>
<div class="b" style="left:912px;top:219px;width:1px;height:115px;background:#dfeaec;"></div>
<div class="b" style="left:987px;top:219px;width:1px;height:115px;background:#dfeaec;"></div>
<div class="b" style="left:1062px;top:333px;width:458px;height:1px;background:#ececec;"></div>
<div class="b" style="left:1062px;top:219px;width:1px;height:115px;background:#ececec;"></div>
<div class="b" style="left:1092px;top:219px;width:1px;height:115px;background:#ececec;"></div>
<div class="b" style="left:1122px;top:219px;width:1px;height:115px;background:#ececec;"></div>
<div class="b" style="left:1152px;top:219px;width:1px;height:115px;background:#ececec;"></div>
<div class="b" style="left:1182px;top:219px;width:1px;height:115px;background:#ececec;"></div>
<div class="b" style="left:1227px;top:219px;width:1px;height:115px;background:#ececec;"></div>
<div class="b" style="left:1257px;top:219px;width:1px;height:115px;background:#ececec;"></div>
<div class="b" style="left:1347px;top:219px;width:1px;height:115px;background:#ececec;"></div>
<div class="b" style="left:1437px;top:219px;width:1px;height:115px;background:#ececec;"></div>
<div class="t" style="top:219.5px;height:17px;line-height:17px;font-size:13px;color:#000;letter-spacing:-0.138px;left:171px;max-width:96px;overflow:hidden;">1.0004 Alternativ</div>
<div class="t" style="top:219.5px;height:17px;line-height:17px;font-size:13px;color:#000;letter-spacing:0.144px;left:270px;">Dichtsch</div>
<div class="b" style="left:398px;top:221px;width:13px;height:13px;background:#fff;border:1px solid #333;box-sizing:border-box;"></div>
<div class="b" style="left:1070px;top:221px;width:13px;height:13px;background:#fff;border:1px solid #333;box-sizing:border-box;"></div>
<div class="b" style="left:1100px;top:221px;width:13px;height:13px;background:#fff;border:1px solid #333;box-sizing:border-box;"></div>
<div class="b" style="left:1130px;top:221px;width:13px;height:13px;background:#fff;border:1px solid #333;box-sizing:border-box;"></div>
<div class="b" style="left:1160px;top:221px;width:13px;height:13px;background:#fff;border:1px solid #333;box-sizing:border-box;"></div>
<div class="b" style="left:1198px;top:221px;width:13px;height:13px;background:#fff;border:1px solid #333;box-sizing:border-box;"></div>
<div class="b" style="left:1235px;top:221px;width:13px;height:13px;background:#fff;border:1px solid #333;box-sizing:border-box;"></div>
<div class="t" style="top:219.5px;height:17px;line-height:17px;font-size:13px;color:#000;letter-spacing:-0.328px;right:1425.33px;">120,000</div>
<div class="t" style="top:219.5px;height:17px;line-height:17px;font-size:13px;color:#000;letter-spacing:-0.330px;left:500px;">m²</div>
<div class="t" style="top:219.5px;height:17px;line-height:17px;font-size:13px;color:#000;letter-spacing:-0.089px;left:540px;">Liefern und zweimaliges Aufbringen einer</div>
<div class="t" style="top:235.5px;height:17px;line-height:17px;font-size:13px;color:#000;letter-spacing:-0.054px;left:540px;">1-komponentigen, schnellabbindenden,</div>
<div class="t" style="top:251.5px;height:17px;line-height:17px;font-size:13px;color:#000;letter-spacing:-0.026px;left:540px;">wasserundurchlässigen, rißüberbrückende und flexible</div>
<div class="t" style="top:267.5px;height:17px;line-height:17px;font-size:13px;color:#000;letter-spacing:-0.021px;left:540px;">Dichtschlämme &nbsp;für den Innen- und Außenbereich.</div>
<div class="t" style="top:283.5px;height:17px;line-height:17px;font-size:13px;color:#000;letter-spacing:-0.002px;left:540px;">Verbrauch 2,6kg/QM</div>
<div class="t" style="top:299.5px;height:17px;line-height:17px;font-size:13px;color:#000;letter-spacing:-0.002px;left:540px;">Trockenschichtdicke der gesamten Abdichtung von</div>
<div class="t" style="top:315.5px;height:17px;line-height:17px;font-size:13px;color:#000;letter-spacing:0.080px;left:540px;">mindestens 2mm.</div>
<div class="t" style="top:219.5px;height:17px;line-height:17px;font-size:13px;color:#000;letter-spacing:-0.346px;right:935.35px;">26,50</div>
<div class="t" style="top:219.5px;height:17px;line-height:17px;font-size:13px;color:#000;letter-spacing:0.193px;right:859.81px;">&lt;EP&gt;</div>
<div class="b" style="left:1381.3px;top:232px;width:1.6px;height:1px;background:#4a4a5a;"></div>
<div class="b" style="left:1393.3px;top:232px;width:1.6px;height:1px;background:#4a4a5a;"></div>
<div class="b" style="left:154px;top:334px;width:13px;height:35px;background:#f0f0f0;"></div>
<div class="b" style="left:154px;top:368px;width:13px;height:1px;background:#d9d9d9;"></div>
<div class="b" style="left:167px;top:334px;width:1px;height:35px;background:#e0e0e0;"></div>
<div class="b" style="left:168px;top:334px;width:894px;height:35px;background:#fff;"></div>
<div class="b" style="left:1062px;top:334px;width:458px;height:35px;background:#ffc0c0;"></div>
<div class="b" style="left:168px;top:368px;width:894px;height:1px;background:#e9e9e9;"></div>
<div class="b" style="left:267px;top:334px;width:1px;height:35px;background:#e9e9e9;"></div>
<div class="b" style="left:367px;top:334px;width:1px;height:35px;background:#e9e9e9;"></div>
<div class="b" style="left:392px;top:334px;width:1px;height:35px;background:#e9e9e9;"></div>
<div class="b" style="left:417px;top:334px;width:1px;height:35px;background:#e9e9e9;"></div>
<div class="b" style="left:497px;top:334px;width:1px;height:35px;background:#e9e9e9;"></div>
<div class="b" style="left:537px;top:334px;width:1px;height:35px;background:#e9e9e9;"></div>
<div class="b" style="left:867px;top:334px;width:1px;height:35px;background:#e9e9e9;"></div>
<div class="b" style="left:912px;top:334px;width:1px;height:35px;background:#e9e9e9;"></div>
<div class="b" style="left:987px;top:334px;width:1px;height:35px;background:#e9e9e9;"></div>
<div class="b" style="left:1062px;top:368px;width:458px;height:1px;background:#ececec;"></div>
<div class="b" style="left:1062px;top:334px;width:1px;height:35px;background:#ececec;"></div>
<div class="b" style="left:1092px;top:334px;width:1px;height:35px;background:#ececec;"></div>
<div class="b" style="left:1122px;top:334px;width:1px;height:35px;background:#ececec;"></div>
<div class="b" style="left:1152px;top:334px;width:1px;height:35px;background:#ececec;"></div>
<div class="b" style="left:1182px;top:334px;width:1px;height:35px;background:#ececec;"></div>
<div class="b" style="left:1227px;top:334px;width:1px;height:35px;background:#ececec;"></div>
<div class="b" style="left:1257px;top:334px;width:1px;height:35px;background:#ececec;"></div>
<div class="b" style="left:1347px;top:334px;width:1px;height:35px;background:#ececec;"></div>
<div class="b" style="left:1437px;top:334px;width:1px;height:35px;background:#ececec;"></div>
<div class="t" style="top:334.5px;height:17px;line-height:17px;font-size:13px;color:#000;letter-spacing:-0.394px;left:171px;max-width:96px;overflow:hidden;">1.0005</div>
<div class="t" style="top:334.5px;height:17px;line-height:17px;font-size:13px;color:#000;letter-spacing:-0.430px;left:270px;">ab</div>
<div class="b" style="left:398px;top:336px;width:13px;height:13px;background:#fff;border:1px solid #333;box-sizing:border-box;"></div>
<div class="b" style="left:1070px;top:336px;width:13px;height:13px;background:#fff;border:1px solid #333;box-sizing:border-box;"></div>
<div class="b" style="left:1100px;top:336px;width:13px;height:13px;background:#fff;border:1px solid #333;box-sizing:border-box;"></div>
<div class="b" style="left:1130px;top:336px;width:13px;height:13px;background:#fff;border:1px solid #333;box-sizing:border-box;"></div>
<div class="b" style="left:1160px;top:336px;width:13px;height:13px;background:#fff;border:1px solid #333;box-sizing:border-box;"></div>
<div class="b" style="left:1198px;top:336px;width:13px;height:13px;background:#fff;border:1px solid #333;box-sizing:border-box;"></div>
<div class="b" style="left:1235px;top:336px;width:13px;height:13px;background:#fff;border:1px solid #333;box-sizing:border-box;"></div>
<div class="t" style="top:334.5px;height:17px;line-height:17px;font-size:13px;color:#000;letter-spacing:-0.227px;right:1425.23px;">44,000</div>
<div class="t" style="top:334.5px;height:17px;line-height:17px;font-size:13px;color:#000;letter-spacing:-0.330px;left:500px;">m²</div>
<div class="t" style="top:334.5px;height:17px;line-height:17px;font-size:13px;color:#000;letter-spacing:-0.007px;left:540px;">AE-Entkopplungs-und Abdichtungssbahn mit</div>
<div class="t" style="top:350.5px;height:17px;line-height:17px;font-size:13px;color:#000;letter-spacing:-0.054px;left:540px;">schnellabbindenden Flexkleber einkleben</div>
<div class="t" style="top:334.5px;height:17px;line-height:17px;font-size:13px;color:#000;letter-spacing:-0.346px;right:935.35px;">38,25</div>
<div class="t" style="top:334.5px;height:17px;line-height:17px;font-size:13px;color:#000;letter-spacing:-0.101px;right:860.10px;">1.683,00</div>
<div class="t" style="top:334.5px;height:17px;line-height:17px;font-size:13px;color:#000;letter-spacing:-0.330px;left:1468.2px;">8337</div>
<div class="b" style="left:1381.3px;top:347px;width:1.6px;height:1px;background:#4a4a5a;"></div>
<div class="b" style="left:1393.3px;top:347px;width:1.6px;height:1px;background:#4a4a5a;"></div>
<div class="b" style="left:154px;top:369px;width:13px;height:115px;background:#f0f0f0;"></div>
<div class="b" style="left:154px;top:483px;width:13px;height:1px;background:#d9d9d9;"></div>
<div class="b" style="left:167px;top:369px;width:1px;height:115px;background:#e0e0e0;"></div>
<div class="b" style="left:168px;top:369px;width:894px;height:115px;background:#e0faff;"></div>
<div class="b" style="left:1062px;top:369px;width:458px;height:115px;background:#ffc0c0;"></div>
<div class="b" style="left:168px;top:483px;width:894px;height:1px;background:#e9e9e9;"></div>
<div class="b" style="left:267px;top:369px;width:1px;height:115px;background:#dfeaec;"></div>
<div class="b" style="left:367px;top:369px;width:1px;height:115px;background:#dfeaec;"></div>
<div class="b" style="left:392px;top:369px;width:1px;height:115px;background:#dfeaec;"></div>
<div class="b" style="left:417px;top:369px;width:1px;height:115px;background:#dfeaec;"></div>
<div class="b" style="left:497px;top:369px;width:1px;height:115px;background:#dfeaec;"></div>
<div class="b" style="left:537px;top:369px;width:1px;height:115px;background:#dfeaec;"></div>
<div class="b" style="left:867px;top:369px;width:1px;height:115px;background:#dfeaec;"></div>
<div class="b" style="left:912px;top:369px;width:1px;height:115px;background:#dfeaec;"></div>
<div class="b" style="left:987px;top:369px;width:1px;height:115px;background:#dfeaec;"></div>
<div class="b" style="left:1062px;top:483px;width:458px;height:1px;background:#ececec;"></div>
<div class="b" style="left:1062px;top:369px;width:1px;height:115px;background:#ececec;"></div>
<div class="b" style="left:1092px;top:369px;width:1px;height:115px;background:#ececec;"></div>
<div class="b" style="left:1122px;top:369px;width:1px;height:115px;background:#ececec;"></div>
<div class="b" style="left:1152px;top:369px;width:1px;height:115px;background:#ececec;"></div>
<div class="b" style="left:1182px;top:369px;width:1px;height:115px;background:#ececec;"></div>
<div class="b" style="left:1227px;top:369px;width:1px;height:115px;background:#ececec;"></div>
<div class="b" style="left:1257px;top:369px;width:1px;height:115px;background:#ececec;"></div>
<div class="b" style="left:1347px;top:369px;width:1px;height:115px;background:#ececec;"></div>
<div class="b" style="left:1437px;top:369px;width:1px;height:115px;background:#ececec;"></div>
<div class="t" style="top:369.5px;height:17px;line-height:17px;font-size:13px;color:#000;letter-spacing:-0.138px;left:171px;max-width:96px;overflow:hidden;">1.0006 Alternativ</div>
<div class="t" style="top:369.5px;height:17px;line-height:17px;font-size:13px;color:#000;letter-spacing:0.144px;left:270px;">Dichtsch</div>
<div class="b" style="left:398px;top:371px;width:13px;height:13px;background:#fff;border:1px solid #333;box-sizing:border-box;"></div>
<div class="b" style="left:1070px;top:371px;width:13px;height:13px;background:#fff;border:1px solid #333;box-sizing:border-box;"></div>
<div class="b" style="left:1100px;top:371px;width:13px;height:13px;background:#fff;border:1px solid #333;box-sizing:border-box;"></div>
<div class="b" style="left:1130px;top:371px;width:13px;height:13px;background:#fff;border:1px solid #333;box-sizing:border-box;"></div>
<div class="b" style="left:1160px;top:371px;width:13px;height:13px;background:#fff;border:1px solid #333;box-sizing:border-box;"></div>
<div class="b" style="left:1198px;top:371px;width:13px;height:13px;background:#fff;border:1px solid #333;box-sizing:border-box;"></div>
<div class="b" style="left:1235px;top:371px;width:13px;height:13px;background:#fff;border:1px solid #333;box-sizing:border-box;"></div>
<div class="t" style="top:369.5px;height:17px;line-height:17px;font-size:13px;color:#000;letter-spacing:-0.227px;right:1425.23px;">44,000</div>
<div class="t" style="top:369.5px;height:17px;line-height:17px;font-size:13px;color:#000;letter-spacing:-0.330px;left:500px;">m²</div>
<div class="t" style="top:369.5px;height:17px;line-height:17px;font-size:13px;color:#000;letter-spacing:-0.089px;left:540px;">Liefern und zweimaliges Aufbringen einer</div>
<div class="t" style="top:385.5px;height:17px;line-height:17px;font-size:13px;color:#000;letter-spacing:-0.054px;left:540px;">1-komponentigen, schnellabbindenden,</div>
<div class="t" style="top:401.5px;height:17px;line-height:17px;font-size:13px;color:#000;letter-spacing:-0.026px;left:540px;">wasserundurchlässigen, rißüberbrückende und flexible</div>
<div class="t" style="top:417.5px;height:17px;line-height:17px;font-size:13px;color:#000;letter-spacing:-0.021px;left:540px;">Dichtschlämme &nbsp;für den Innen- und Außenbereich.</div>
<div class="t" style="top:433.5px;height:17px;line-height:17px;font-size:13px;color:#000;letter-spacing:-0.002px;left:540px;">Verbrauch 2,6kg/QM</div>
<div class="t" style="top:449.5px;height:17px;line-height:17px;font-size:13px;color:#000;letter-spacing:-0.002px;left:540px;">Trockenschichtdicke der gesamten Abdichtung von</div>
<div class="t" style="top:465.5px;height:17px;line-height:17px;font-size:13px;color:#000;letter-spacing:0.080px;left:540px;">mindestens 2mm.</div>
<div class="t" style="top:369.5px;height:17px;line-height:17px;font-size:13px;color:#000;letter-spacing:-0.346px;right:935.35px;">26,50</div>
<div class="t" style="top:369.5px;height:17px;line-height:17px;font-size:13px;color:#000;letter-spacing:0.193px;right:859.81px;">&lt;EP&gt;</div>
<div class="b" style="left:1381.3px;top:382px;width:1.6px;height:1px;background:#4a4a5a;"></div>
<div class="b" style="left:1393.3px;top:382px;width:1.6px;height:1px;background:#4a4a5a;"></div>
<div class="b" style="left:154px;top:484px;width:13px;height:35px;background:#f0f0f0;"></div>
<div class="b" style="left:154px;top:518px;width:13px;height:1px;background:#d9d9d9;"></div>
<div class="b" style="left:167px;top:484px;width:1px;height:35px;background:#e0e0e0;"></div>
<div class="b" style="left:168px;top:484px;width:894px;height:35px;background:#fff;"></div>
<div class="b" style="left:1062px;top:484px;width:458px;height:35px;background:#ffc0c0;"></div>
<div class="b" style="left:168px;top:518px;width:894px;height:1px;background:#e9e9e9;"></div>
<div class="b" style="left:267px;top:484px;width:1px;height:35px;background:#e9e9e9;"></div>
<div class="b" style="left:367px;top:484px;width:1px;height:35px;background:#e9e9e9;"></div>
<div class="b" style="left:392px;top:484px;width:1px;height:35px;background:#e9e9e9;"></div>
<div class="b" style="left:417px;top:484px;width:1px;height:35px;background:#e9e9e9;"></div>
<div class="b" style="left:497px;top:484px;width:1px;height:35px;background:#e9e9e9;"></div>
<div class="b" style="left:537px;top:484px;width:1px;height:35px;background:#e9e9e9;"></div>
<div class="b" style="left:867px;top:484px;width:1px;height:35px;background:#e9e9e9;"></div>
<div class="b" style="left:912px;top:484px;width:1px;height:35px;background:#e9e9e9;"></div>
<div class="b" style="left:987px;top:484px;width:1px;height:35px;background:#e9e9e9;"></div>
<div class="b" style="left:1062px;top:518px;width:458px;height:1px;background:#ececec;"></div>
<div class="b" style="left:1062px;top:484px;width:1px;height:35px;background:#ececec;"></div>
<div class="b" style="left:1092px;top:484px;width:1px;height:35px;background:#ececec;"></div>
<div class="b" style="left:1122px;top:484px;width:1px;height:35px;background:#ececec;"></div>
<div class="b" style="left:1152px;top:484px;width:1px;height:35px;background:#ececec;"></div>
<div class="b" style="left:1182px;top:484px;width:1px;height:35px;background:#ececec;"></div>
<div class="b" style="left:1227px;top:484px;width:1px;height:35px;background:#ececec;"></div>
<div class="b" style="left:1257px;top:484px;width:1px;height:35px;background:#ececec;"></div>
<div class="b" style="left:1347px;top:484px;width:1px;height:35px;background:#ececec;"></div>
<div class="b" style="left:1437px;top:484px;width:1px;height:35px;background:#ececec;"></div>
<div class="t" style="top:484.5px;height:17px;line-height:17px;font-size:13px;color:#000;letter-spacing:-0.394px;left:171px;max-width:96px;overflow:hidden;">1.0007</div>
<div class="t" style="top:484.5px;height:17px;line-height:17px;font-size:13px;color:#000;letter-spacing:-0.430px;left:270px;">ab</div>
<div class="b" style="left:398px;top:486px;width:13px;height:13px;background:#fff;border:1px solid #333;box-sizing:border-box;"></div>
<div class="b" style="left:1070px;top:486px;width:13px;height:13px;background:#fff;border:1px solid #333;box-sizing:border-box;"></div>
<div class="b" style="left:1100px;top:486px;width:13px;height:13px;background:#fff;border:1px solid #333;box-sizing:border-box;"></div>
<div class="b" style="left:1130px;top:486px;width:13px;height:13px;background:#fff;border:1px solid #333;box-sizing:border-box;"></div>
<div class="b" style="left:1160px;top:486px;width:13px;height:13px;background:#fff;border:1px solid #333;box-sizing:border-box;"></div>
<div class="b" style="left:1198px;top:486px;width:13px;height:13px;background:#fff;border:1px solid #333;box-sizing:border-box;"></div>
<div class="b" style="left:1235px;top:486px;width:13px;height:13px;background:#fff;border:1px solid #333;box-sizing:border-box;"></div>
<div class="t" style="top:484.5px;height:17px;line-height:17px;font-size:13px;color:#000;letter-spacing:-0.227px;right:1425.23px;">55,000</div>
<div class="t" style="top:484.5px;height:17px;line-height:17px;font-size:13px;color:#000;letter-spacing:-0.330px;left:500px;">m²</div>
<div class="t" style="top:484.5px;height:17px;line-height:17px;font-size:13px;color:#000;letter-spacing:-0.007px;left:540px;">AE-Entkopplungs-und Abdichtungssbahn mit</div>
<div class="t" style="top:500.5px;height:17px;line-height:17px;font-size:13px;color:#000;letter-spacing:-0.054px;left:540px;">schnellabbindenden Flexkleber einkleben</div>
<div class="t" style="top:484.5px;height:17px;line-height:17px;font-size:13px;color:#000;letter-spacing:-0.346px;right:935.35px;">38,25</div>
<div class="t" style="top:484.5px;height:17px;line-height:17px;font-size:13px;color:#000;letter-spacing:-0.101px;right:860.10px;">2.103,75</div>
<div class="t" style="top:484.5px;height:17px;line-height:17px;font-size:13px;color:#000;letter-spacing:-0.330px;left:1468.2px;">8337</div>
<div class="b" style="left:1381.3px;top:497px;width:1.6px;height:1px;background:#4a4a5a;"></div>
<div class="b" style="left:1393.3px;top:497px;width:1.6px;height:1px;background:#4a4a5a;"></div>
<div class="b" style="left:154px;top:519px;width:13px;height:83px;background:#f0f0f0;"></div>
<div class="b" style="left:154px;top:601px;width:13px;height:1px;background:#d9d9d9;"></div>
<div class="b" style="left:167px;top:519px;width:1px;height:83px;background:#e0e0e0;"></div>
<div class="b" style="left:168px;top:519px;width:894px;height:83px;background:#e0faff;"></div>
<div class="b" style="left:1062px;top:519px;width:458px;height:83px;background:#ffc0c0;"></div>
<div class="b" style="left:168px;top:601px;width:894px;height:1px;background:#e9e9e9;"></div>
<div class="b" style="left:267px;top:519px;width:1px;height:83px;background:#dfeaec;"></div>
<div class="b" style="left:367px;top:519px;width:1px;height:83px;background:#dfeaec;"></div>
<div class="b" style="left:392px;top:519px;width:1px;height:83px;background:#dfeaec;"></div>
<div class="b" style="left:417px;top:519px;width:1px;height:83px;background:#dfeaec;"></div>
<div class="b" style="left:497px;top:519px;width:1px;height:83px;background:#dfeaec;"></div>
<div class="b" style="left:537px;top:519px;width:1px;height:83px;background:#dfeaec;"></div>
<div class="b" style="left:867px;top:519px;width:1px;height:83px;background:#dfeaec;"></div>
<div class="b" style="left:912px;top:519px;width:1px;height:83px;background:#dfeaec;"></div>
<div class="b" style="left:987px;top:519px;width:1px;height:83px;background:#dfeaec;"></div>
<div class="b" style="left:1062px;top:601px;width:458px;height:1px;background:#ececec;"></div>
<div class="b" style="left:1062px;top:519px;width:1px;height:83px;background:#ececec;"></div>
<div class="b" style="left:1092px;top:519px;width:1px;height:83px;background:#ececec;"></div>
<div class="b" style="left:1122px;top:519px;width:1px;height:83px;background:#ececec;"></div>
<div class="b" style="left:1152px;top:519px;width:1px;height:83px;background:#ececec;"></div>
<div class="b" style="left:1182px;top:519px;width:1px;height:83px;background:#ececec;"></div>
<div class="b" style="left:1227px;top:519px;width:1px;height:83px;background:#ececec;"></div>
<div class="b" style="left:1257px;top:519px;width:1px;height:83px;background:#ececec;"></div>
<div class="b" style="left:1347px;top:519px;width:1px;height:83px;background:#ececec;"></div>
<div class="b" style="left:1437px;top:519px;width:1px;height:83px;background:#ececec;"></div>
<div class="t" style="top:519.5px;height:17px;line-height:17px;font-size:13px;color:#000;letter-spacing:-0.394px;left:171px;max-width:96px;overflow:hidden;">1.0008</div>
<div class="t" style="top:519.5px;height:17px;line-height:17px;font-size:13px;color:#000;left:270px;">Dichtb</div>
<div class="b" style="left:398px;top:521px;width:13px;height:13px;background:#fff;border:1px solid #333;box-sizing:border-box;"></div>
<div class="b" style="left:1070px;top:521px;width:13px;height:13px;background:#fff;border:1px solid #333;box-sizing:border-box;"></div>
<div class="b" style="left:1100px;top:521px;width:13px;height:13px;background:#fff;border:1px solid #333;box-sizing:border-box;"></div>
<div class="b" style="left:1130px;top:521px;width:13px;height:13px;background:#fff;border:1px solid #333;box-sizing:border-box;"></div>
<div class="b" style="left:1160px;top:521px;width:13px;height:13px;background:#fff;border:1px solid #333;box-sizing:border-box;"></div>
<div class="b" style="left:1198px;top:521px;width:13px;height:13px;background:#fff;border:1px solid #333;box-sizing:border-box;"></div>
<div class="b" style="left:1235px;top:521px;width:13px;height:13px;background:#fff;border:1px solid #333;box-sizing:border-box;"></div>
<div class="t" style="top:519.5px;height:17px;line-height:17px;font-size:13px;color:#000;letter-spacing:-0.328px;right:1425.33px;">380,000</div>
<div class="t" style="top:519.5px;height:17px;line-height:17px;font-size:13px;color:#000;letter-spacing:-0.140px;left:500px;">lfdm</div>
<div class="t" style="top:519.5px;height:17px;line-height:17px;font-size:13px;color:#000;letter-spacing:-0.011px;left:540px;">Querelastisches, vollflächig vlieskaschiertes</div>
<div class="t" style="top:535.5px;height:17px;line-height:17px;font-size:13px;color:#000;letter-spacing:-0.090px;left:540px;">Spezailfugendichtband 120mm breit liefern und verlegen.</div>
<div class="t" style="top:551.5px;height:17px;line-height:17px;font-size:13px;color:#000;letter-spacing:-0.030px;left:540px;">Zum Abdichten von Ecken und Fugen in Kombination</div>
<div class="t" style="top:567.5px;height:17px;line-height:17px;font-size:13px;color:#000;letter-spacing:0.009px;left:540px;">mit Schönox Verbundabdichtung unterhalb keramischer</div>
<div class="t" style="top:583.5px;height:17px;line-height:17px;font-size:13px;color:#000;letter-spacing:-0.018px;left:540px;">Beläge in Feucht und Nassräumen.</div>
<div class="t" style="top:519.5px;height:17px;line-height:17px;font-size:13px;color:#000;letter-spacing:-0.346px;right:935.35px;">12,00</div>
<div class="t" style="top:519.5px;height:17px;line-height:17px;font-size:13px;color:#000;letter-spacing:-0.101px;right:860.10px;">4.560,00</div>
<div class="t" style="top:519.5px;height:17px;line-height:17px;font-size:13px;color:#000;letter-spacing:-0.330px;left:1468.2px;">8337</div>
<div class="b" style="left:1381.3px;top:532px;width:1.6px;height:1px;background:#4a4a5a;"></div>
<div class="b" style="left:1393.3px;top:532px;width:1.6px;height:1px;background:#4a4a5a;"></div>
<div class="b" style="left:154px;top:602px;width:13px;height:117px;background:#f0f0f0;"></div>
<div class="b" style="left:154px;top:718px;width:13px;height:1px;background:#d9d9d9;"></div>
<div class="b" style="left:167px;top:602px;width:1px;height:117px;background:#e0e0e0;"></div>
<div class="b" style="left:168px;top:602px;width:894px;height:117px;background:#fff;"></div>
<div class="b" style="left:1062px;top:602px;width:458px;height:117px;background:#ffc0c0;"></div>
<div class="b" style="left:168px;top:718px;width:894px;height:1px;background:#e9e9e9;"></div>
<div class="b" style="left:267px;top:602px;width:1px;height:117px;background:#e9e9e9;"></div>
<div class="b" style="left:367px;top:602px;width:1px;height:117px;background:#e9e9e9;"></div>
<div class="b" style="left:392px;top:602px;width:1px;height:117px;background:#e9e9e9;"></div>
<div class="b" style="left:417px;top:602px;width:1px;height:117px;background:#e9e9e9;"></div>
<div class="b" style="left:497px;top:602px;width:1px;height:117px;background:#e9e9e9;"></div>
<div class="b" style="left:537px;top:602px;width:1px;height:117px;background:#e9e9e9;"></div>
<div class="b" style="left:867px;top:602px;width:1px;height:117px;background:#e9e9e9;"></div>
<div class="b" style="left:912px;top:602px;width:1px;height:117px;background:#e9e9e9;"></div>
<div class="b" style="left:987px;top:602px;width:1px;height:117px;background:#e9e9e9;"></div>
<div class="b" style="left:1062px;top:718px;width:458px;height:1px;background:#ececec;"></div>
<div class="b" style="left:1062px;top:602px;width:1px;height:117px;background:#ececec;"></div>
<div class="b" style="left:1092px;top:602px;width:1px;height:117px;background:#ececec;"></div>
<div class="b" style="left:1122px;top:602px;width:1px;height:117px;background:#ececec;"></div>
<div class="b" style="left:1152px;top:602px;width:1px;height:117px;background:#ececec;"></div>
<div class="b" style="left:1182px;top:602px;width:1px;height:117px;background:#ececec;"></div>
<div class="b" style="left:1227px;top:602px;width:1px;height:117px;background:#ececec;"></div>
<div class="b" style="left:1257px;top:602px;width:1px;height:117px;background:#ececec;"></div>
<div class="b" style="left:1347px;top:602px;width:1px;height:117px;background:#ececec;"></div>
<div class="b" style="left:1437px;top:602px;width:1px;height:117px;background:#ececec;"></div>
<div class="t" style="top:602.5px;height:17px;line-height:17px;font-size:13px;color:#000;letter-spacing:-0.394px;left:171px;max-width:96px;overflow:hidden;">1.0009</div>
<div class="t" style="top:602.5px;height:17px;line-height:17px;font-size:13px;color:#000;letter-spacing:0.038px;left:270px;">abdin</div>
<div class="b" style="left:398px;top:604px;width:13px;height:13px;background:#fff;border:1px solid #333;box-sizing:border-box;"></div>
<div class="b" style="left:1070px;top:604px;width:13px;height:13px;background:#fff;border:1px solid #333;box-sizing:border-box;"></div>
<div class="b" style="left:1100px;top:604px;width:13px;height:13px;background:#fff;border:1px solid #333;box-sizing:border-box;"></div>
<div class="b" style="left:1130px;top:604px;width:13px;height:13px;background:#fff;border:1px solid #333;box-sizing:border-box;"></div>
<div class="b" style="left:1160px;top:604px;width:13px;height:13px;background:#fff;border:1px solid #333;box-sizing:border-box;"></div>
<div class="b" style="left:1198px;top:604px;width:13px;height:13px;background:#fff;border:1px solid #333;box-sizing:border-box;"></div>
<div class="b" style="left:1235px;top:604px;width:13px;height:13px;background:#fff;border:1px solid #333;box-sizing:border-box;"></div>
<div class="t" style="top:602.5px;height:17px;line-height:17px;font-size:13px;color:#000;letter-spacing:-0.227px;right:1425.23px;">33,000</div>
<div class="t" style="top:602.5px;height:17px;line-height:17px;font-size:13px;color:#000;letter-spacing:0.179px;left:500px;">Stck</div>
<div class="t" style="top:602.5px;height:17px;line-height:17px;font-size:13px;color:#000;letter-spacing:-0.063px;left:540px;">Innenecke liefern und verlegen anschließend mit</div>
<div class="t" style="top:602.5px;height:17px;line-height:17px;font-size:13px;color:#000;letter-spacing:-0.154px;right:935.15px;">11,50</div>
<div class="t" style="top:602.5px;height:17px;line-height:17px;font-size:13px;color:#000;letter-spacing:-0.294px;right:860.29px;">379,50</div>
<div class="t" style="top:602.5px;height:17px;line-height:17px;font-size:13px;color:#000;letter-spacing:-0.330px;left:1468.2px;">8337</div>
<div class="b" style="left:1381.3px;top:615px;width:1.6px;height:1px;background:#4a4a5a;"></div>
<div class="b" style="left:1393.3px;top:615px;width:1.6px;height:1px;background:#4a4a5a;"></div>
<div class="b" style="left:417px;top:0px;width:81px;height:34px;background:#c2c2c2;border:1px dotted #222;box-sizing:border-box;"></div>
<svg class="b" style="left:158px;top:4px" width="5" height="8" viewBox="0 0 5 8"><path d="M0 0 L4.5 4 L0 8 Z" fill="#000"/></svg>
</div>
<div class="b" style="left:1520px;top:322px;width:17px;height:670px;background:#f0f0f0;"></div>
<svg class="b" style="left:1523.5px;top:328px" width="9" height="5.5" viewBox="0 0 9 5.5"><path d="M0.6 5 L4.5 1 L8.4 5" fill="none" stroke="#505050" stroke-width="1.6"/></svg>
<div class="b" style="left:1521px;top:339px;width:15px;height:17px;background:#cdcdcd;"></div>
<svg class="b" style="left:1523.5px;top:981px" width="9" height="5.5" viewBox="0 0 9 5.5"><path d="M0.6 0.5 L4.5 4.5 L8.4 0.5" fill="none" stroke="#505050" stroke-width="1.6"/></svg>
<div class="b" style="left:154px;top:992px;width:1384px;height:17px;background:#f0f0f0;"></div>
<svg class="b" style="left:173px;top:995.5px" width="5.5" height="9" viewBox="0 0 5.5 9"><path d="M5 0.6 L1 4.5 L5 8.4" fill="none" stroke="#505050" stroke-width="1.6"/></svg>
<div class="b" style="left:185px;top:993px;width:825px;height:15px;background:#cdcdcd;"></div>
<svg class="b" style="left:1508.5px;top:995.5px" width="5.5" height="9" viewBox="0 0 5.5 9"><path d="M0.5 0.6 L4.5 4.5 L0.5 8.4" fill="none" stroke="#505050" stroke-width="1.6"/></svg>
<div class="t" style="top:306.5px;height:17px;line-height:17px;font-size:13px;color:#646464;letter-spacing:0.108px;right:271.39px;">Summe Pos.</div>
<div class="b" style="left:1654px;top:304px;width:221px;height:22px;background:#f5f5f5;border:1px solid #dcdcdc;box-sizing:border-box;"></div>
<div class="b" style="left:1655px;top:305px;width:219px;height:20px;border:1px solid #ececec;box-sizing:border-box;"></div>
<div class="t" style="top:307.0px;height:17px;line-height:17px;font-size:13px;color:#6e6e6e;right:51.00px;">102.734,27</div>
<div class="t" style="top:308.0px;height:17px;line-height:17px;font-size:13px;color:#505050;letter-spacing:0.017px;left:1880px;">EUR</div>
<div class="t" style="top:330.5px;height:17px;line-height:17px;font-size:13px;color:#2b579a;letter-spacing:-0.021px;right:271.52px;">pauschal Zu / Ab</div>
<div class="b" style="left:1654px;top:328px;width:221px;height:22px;background:#f4f4f4;border:1px solid #6e6e6e;box-sizing:border-box;"></div>
<div class="t" style="top:331.0px;height:17px;line-height:17px;font-size:13px;color:#6e6e6e;right:51.00px;">0,00</div>
<div class="t" style="top:331.0px;height:17px;line-height:17px;font-size:13px;color:#505050;letter-spacing:0.017px;left:1880px;">EUR</div>
<div class="t" style="top:354.5px;height:17px;line-height:17px;font-size:13px;color:#646464;letter-spacing:-0.058px;right:271.56px;">Summe</div>
<div class="b" style="left:1654px;top:352px;width:221px;height:22px;background:#f5f5f5;border:1px solid #dcdcdc;box-sizing:border-box;"></div>
<div class="b" style="left:1655px;top:353px;width:219px;height:20px;border:1px solid #ececec;box-sizing:border-box;"></div>
<div class="t" style="top:355.0px;height:17px;line-height:17px;font-size:13px;color:#6e6e6e;right:51.00px;">102.734,27</div>
<div class="t" style="top:355.0px;height:17px;line-height:17px;font-size:13px;color:#505050;letter-spacing:0.017px;left:1880px;">EUR</div>
<div class="b" style="left:1541px;top:380px;width:371px;height:16px;background:#2b579a;"></div>
<div class="t" style="top:380.8px;height:15px;line-height:15px;font-size:11px;color:#fff;font-weight:bold;letter-spacing:0.064px;left:1672.2px;">Nachlaß und Kosten</div>
<div class="t" style="top:402.5px;height:17px;line-height:17px;font-size:13px;color:#646464;letter-spacing:0.104px;right:271.40px;">./. Nachlaß</div>
<div class="b" style="left:1654px;top:402px;width:70px;height:22px;background:#f4f4f4;border:1px solid #6e6e6e;box-sizing:border-box;"></div>
<div class="t" style="top:405.0px;height:17px;line-height:17px;font-size:13px;color:#6e6e6e;left:1668.5px;">0,00</div>
<div class="b" style="left:1729px;top:403px;width:15px;height:10px;background:#f0f0f0;border:1px solid #c8c8c8;box-sizing:border-box;"></div>
<svg class="b" style="left:1733px;top:406px" width="7" height="4" viewBox="0 0 7 4"><path d="M0 4 L3.5 0 L7 4 Z" fill="#000"/></svg>
<div class="b" style="left:1729px;top:413px;width:15px;height:10px;background:#f0f0f0;border:1px solid #c8c8c8;box-sizing:border-box;"></div>
<svg class="b" style="left:1733px;top:417px" width="7" height="4" viewBox="0 0 7 4"><path d="M0 0 L3.5 4 L7 0 Z" fill="#000"/></svg>
<div class="t" style="top:403.5px;height:17px;line-height:17px;font-size:13px;color:#505050;letter-spacing:-0.559px;left:1750px;">%</div>
<div class="b" style="left:1772px;top:400px;width:103px;height:22px;background:#f5f5f5;border:1px solid #dcdcdc;box-sizing:border-box;"></div>
<div class="b" style="left:1773px;top:401px;width:101px;height:20px;border:1px solid #ececec;box-sizing:border-box;"></div>
<div class="t" style="top:403.0px;height:17px;line-height:17px;font-size:13px;color:#6e6e6e;right:51.00px;">0,00</div>
<div class="t" style="top:403.0px;height:17px;line-height:17px;font-size:13px;color:#505050;letter-spacing:0.017px;left:1880px;">EUR</div>
<div class="t" style="top:426.5px;height:17px;line-height:17px;font-size:13px;color:#646464;letter-spacing:0.208px;right:271.29px;">./. Kosten</div>
<div class="b" style="left:1654px;top:426px;width:70px;height:22px;background:#f4f4f4;border:1px solid #6e6e6e;box-sizing:border-box;"></div>
<div class="t" style="top:429.0px;height:17px;line-height:17px;font-size:13px;color:#6e6e6e;left:1668.5px;">0,00</div>
<div class="b" style="left:1729px;top:427px;width:15px;height:10px;background:#f0f0f0;border:1px solid #c8c8c8;box-sizing:border-box;"></div>
<svg class="b" style="left:1733px;top:430px" width="7" height="4" viewBox="0 0 7 4"><path d="M0 4 L3.5 0 L7 4 Z" fill="#000"/></svg>
<div class="b" style="left:1729px;top:437px;width:15px;height:10px;background:#f0f0f0;border:1px solid #c8c8c8;box-sizing:border-box;"></div>
<svg class="b" style="left:1733px;top:441px" width="7" height="4" viewBox="0 0 7 4"><path d="M0 0 L3.5 4 L7 0 Z" fill="#000"/></svg>
<div class="t" style="top:429.5px;height:17px;line-height:17px;font-size:13px;color:#505050;letter-spacing:-0.559px;left:1750px;">%</div>
<div class="b" style="left:1772px;top:424px;width:103px;height:22px;background:#f5f5f5;border:1px solid #dcdcdc;box-sizing:border-box;"></div>
<div class="b" style="left:1773px;top:425px;width:101px;height:20px;border:1px solid #ececec;box-sizing:border-box;"></div>
<div class="t" style="top:427.0px;height:17px;line-height:17px;font-size:13px;color:#6e6e6e;right:51.00px;">0,00</div>
<div class="t" style="top:427.0px;height:17px;line-height:17px;font-size:13px;color:#505050;letter-spacing:0.017px;left:1880px;">EUR</div>
<div class="b" style="left:1541px;top:458px;width:371px;height:22px;background:#2b579a;"></div>
<div class="t" style="top:461.8px;height:15px;line-height:15px;font-size:11px;color:#fff;font-weight:bold;letter-spacing:0.156px;left:1664.0px;">Netto + Steuer = Brutto</div>
<div class="t" style="top:488.5px;height:17px;line-height:17px;font-size:13px;color:#2b579a;letter-spacing:0.053px;right:271.45px;">Netto:</div>
<div class="b" style="left:1654px;top:486px;width:221px;height:22px;background:#f5f5f5;border:1px solid #dcdcdc;box-sizing:border-box;"></div>
<div class="b" style="left:1655px;top:487px;width:219px;height:20px;border:1px solid #ececec;box-sizing:border-box;"></div>
<div class="t" style="top:489.0px;height:17px;line-height:17px;font-size:13px;color:#6e6e6e;font-weight:bold;right:51.00px;">102.734,27</div>
<div class="t" style="top:489.0px;height:17px;line-height:17px;font-size:13px;color:#505050;letter-spacing:0.017px;left:1880px;">EUR</div>
<div class="t" style="top:512.5px;height:17px;line-height:17px;font-size:13px;color:#2b579a;letter-spacing:0.054px;right:271.45px;">zzgl.</div>
<div class="b" style="left:1654px;top:510px;width:116px;height:22px;background:#e1e1e1;border:1px solid #adadad;box-sizing:border-box;"></div>
<div class="t" style="top:514.0px;height:15px;line-height:15px;font-size:11px;color:#000;letter-spacing:-0.204px;left:1659px;">Ust. 20%</div>
<svg class="b" style="left:1755px;top:519.0px" width="9" height="5" viewBox="0 0 9 5"><path d="M0.5 0.5 L4.5 4.5 L8.5 0.5" fill="none" stroke="#333" stroke-width="1.2"/></svg>
<div class="b" style="left:1772px;top:510px;width:103px;height:22px;background:#f5f5f5;border:1px solid #dcdcdc;box-sizing:border-box;"></div>
<div class="b" style="left:1773px;top:511px;width:101px;height:20px;border:1px solid #ececec;box-sizing:border-box;"></div>
<div class="t" style="top:513.0px;height:17px;line-height:17px;font-size:13px;color:#6e6e6e;font-weight:bold;right:51.00px;">20.546,85</div>
<div class="t" style="top:513.0px;height:17px;line-height:17px;font-size:13px;color:#505050;letter-spacing:0.017px;left:1880px;">EUR</div>
<div class="t" style="top:536.5px;height:17px;line-height:17px;font-size:13px;color:#2b579a;font-weight:bold;letter-spacing:-0.248px;right:271.75px;">Brutto</div>
<div class="b" style="left:1654px;top:534px;width:221px;height:22px;background:#f5f5f5;border:1px solid #dcdcdc;box-sizing:border-box;"></div>
<div class="b" style="left:1655px;top:535px;width:219px;height:20px;border:1px solid #ececec;box-sizing:border-box;"></div>
<div class="t" style="top:537.0px;height:17px;line-height:17px;font-size:13px;color:#6e6e6e;font-weight:bold;right:51.00px;">123.281,12</div>
<div class="t" style="top:537.0px;height:17px;line-height:17px;font-size:13px;color:#505050;font-weight:bold;letter-spacing:0.017px;left:1880px;">EUR</div>
<div class="b" style="left:1541px;top:560px;width:371px;height:14px;background:#2b579a;"></div>
<div class="t" style="top:559.8px;height:15px;line-height:15px;font-size:11px;color:#fff;font-weight:bold;letter-spacing:0.196px;left:1640.5px;">Brutto - Sicherheit = Zahlbetrag</div>
<div class="t" style="top:584.5px;height:17px;line-height:17px;font-size:13px;color:#646464;letter-spacing:0.053px;right:270.15px;">./. Sicherheit</div>
<div class="b" style="left:1654px;top:582px;width:70px;height:22px;background:#f4f4f4;border:1px solid #6e6e6e;box-sizing:border-box;"></div>
<div class="t" style="top:585.0px;height:17px;line-height:17px;font-size:13px;color:#6e6e6e;left:1668.5px;">0,00</div>
<div class="b" style="left:1729px;top:583px;width:15px;height:10px;background:#f0f0f0;border:1px solid #c8c8c8;box-sizing:border-box;"></div>
<svg class="b" style="left:1733px;top:586px" width="7" height="4" viewBox="0 0 7 4"><path d="M0 4 L3.5 0 L7 4 Z" fill="#000"/></svg>
<div class="b" style="left:1729px;top:593px;width:15px;height:10px;background:#f0f0f0;border:1px solid #c8c8c8;box-sizing:border-box;"></div>
<svg class="b" style="left:1733px;top:597px" width="7" height="4" viewBox="0 0 7 4"><path d="M0 0 L3.5 4 L7 0 Z" fill="#000"/></svg>
<div class="t" style="top:585.5px;height:17px;line-height:17px;font-size:13px;color:#505050;letter-spacing:-0.559px;left:1749.5px;">%</div>
<div class="b" style="left:1772px;top:582px;width:103px;height:22px;background:#f5f5f5;border:1px solid #dcdcdc;box-sizing:border-box;"></div>
<div class="b" style="left:1773px;top:583px;width:101px;height:20px;border:1px solid #ececec;box-sizing:border-box;"></div>
<div class="t" style="top:585.0px;height:17px;line-height:17px;font-size:13px;color:#6e6e6e;right:51.00px;">0,00</div>
<div class="t" style="top:585.0px;height:17px;line-height:17px;font-size:13px;color:#505050;letter-spacing:0.017px;left:1880px;">EUR</div>
<div class="t" style="top:608.5px;height:17px;line-height:17px;font-size:13px;color:#dc143c;font-weight:bold;letter-spacing:0.187px;right:270.01px;">Total ohne Sk.</div>
<div class="b" style="left:1654px;top:606px;width:221px;height:22px;background:#f5f5f5;border:1px solid #dcdcdc;box-sizing:border-box;"></div>
<div class="b" style="left:1655px;top:607px;width:219px;height:20px;border:1px solid #ececec;box-sizing:border-box;"></div>
<div class="t" style="top:609.0px;height:17px;line-height:17px;font-size:13px;color:#6e6e6e;right:51.00px;">123.281,12</div>
<div class="t" style="top:609.0px;height:17px;line-height:17px;font-size:13px;color:#505050;font-weight:bold;letter-spacing:0.017px;left:1880px;">EUR</div>
<div class="b" style="left:1541px;top:636px;width:371px;height:14px;background:#2b579a;"></div>
<div class="t" style="top:635.8px;height:15px;line-height:15px;font-size:11px;color:#fff;font-weight:bold;letter-spacing:0.217px;left:1658.0px;">Zahlbetrag abzgl. Skonto</div>
<div class="b" style="left:1654px;top:657px;width:13px;height:13px;background:#fff;border:1px solid #333;box-sizing:border-box;"></div>
<div class="t" style="top:655.8px;height:17px;line-height:17px;font-size:13px;color:#000;letter-spacing:-0.065px;left:1670.5px;">Skonto aus vorherigen AZ nicht abziehen</div>
<div class="t" style="top:679.0px;height:17px;line-height:17px;font-size:13px;color:#646464;letter-spacing:-0.156px;right:270.36px;">Zahlung-Key</div>
<div class="b" style="left:1654px;top:677px;width:256px;height:21px;background:#e1e1e1;border:1px solid #adadad;box-sizing:border-box;"></div>
<div class="t" style="top:680.5px;height:15px;line-height:15px;font-size:11px;color:#000;letter-spacing:-0.041px;left:1659px;">[0000] &nbsp;_Individuell_</div>
<svg class="b" style="left:1895px;top:685.5px" width="9" height="5" viewBox="0 0 9 5"><path d="M0.5 0.5 L4.5 4.5 L8.5 0.5" fill="none" stroke="#333" stroke-width="1.2"/></svg>
<div class="t" style="top:703.0px;height:17px;line-height:17px;font-size:13px;color:#646464;letter-spacing:0.208px;right:269.99px;">./. Skonto</div>
<div class="b" style="left:1654px;top:702px;width:70px;height:22px;background:#f4f4f4;border:1px solid #6e6e6e;box-sizing:border-box;"></div>
<div class="t" style="top:705.0px;height:17px;line-height:17px;font-size:13px;color:#6e6e6e;left:1668.5px;">2,00</div>
<div class="b" style="left:1729px;top:703px;width:15px;height:10px;background:#f0f0f0;border:1px solid #c8c8c8;box-sizing:border-box;"></div>
<svg class="b" style="left:1733px;top:706px" width="7" height="4" viewBox="0 0 7 4"><path d="M0 4 L3.5 0 L7 4 Z" fill="#000"/></svg>
<div class="b" style="left:1729px;top:713px;width:15px;height:10px;background:#f0f0f0;border:1px solid #c8c8c8;box-sizing:border-box;"></div>
<svg class="b" style="left:1733px;top:717px" width="7" height="4" viewBox="0 0 7 4"><path d="M0 0 L3.5 4 L7 0 Z" fill="#000"/></svg>
<div class="t" style="top:704.0px;height:17px;line-height:17px;font-size:13px;color:#505050;letter-spacing:-0.559px;left:1749.5px;">%</div>
<div class="b" style="left:1773px;top:702px;width:53px;height:22px;background:#f4f4f4;border:1px solid #6e6e6e;box-sizing:border-box;"></div>
<div class="t" style="top:705.0px;height:17px;line-height:17px;font-size:13px;color:#6e6e6e;left:1794.9px;">5</div>
<div class="b" style="left:1830px;top:703px;width:15px;height:10px;background:#f0f0f0;border:1px solid #c8c8c8;box-sizing:border-box;"></div>
<svg class="b" style="left:1834px;top:706px" width="7" height="4" viewBox="0 0 7 4"><path d="M0 4 L3.5 0 L7 4 Z" fill="#000"/></svg>
<div class="b" style="left:1830px;top:713px;width:15px;height:10px;background:#f0f0f0;border:1px solid #c8c8c8;box-sizing:border-box;"></div>
<svg class="b" style="left:1834px;top:717px" width="7" height="4" viewBox="0 0 7 4"><path d="M0 0 L3.5 4 L7 0 Z" fill="#000"/></svg>
<div class="t" style="top:704.0px;height:17px;line-height:17px;font-size:13px;color:#646464;letter-spacing:-0.226px;left:1852px;">Tage(n)</div>
<div class="t" style="top:727.0px;height:17px;line-height:17px;font-size:13px;color:#646464;letter-spacing:-0.028px;left:1663px;">Skontobetrag</div>
<div class="b" style="left:1773px;top:726px;width:102px;height:22px;background:#f5f5f5;border:1px solid #dcdcdc;box-sizing:border-box;"></div>
<div class="b" style="left:1774px;top:727px;width:100px;height:20px;border:1px solid #ececec;box-sizing:border-box;"></div>
<div class="t" style="top:729.0px;height:17px;line-height:17px;font-size:13px;color:#6e6e6e;right:51.00px;">2.465,62</div>
<div class="t" style="top:729.0px;height:17px;line-height:17px;font-size:13px;color:#505050;letter-spacing:0.017px;left:1880px;">EUR</div>
<div class="t" style="top:753.0px;height:17px;line-height:17px;font-size:13px;color:#dc143c;font-weight:bold;letter-spacing:0.206px;right:269.99px;">Total mit Sk.</div>
<div class="b" style="left:1654px;top:752px;width:221px;height:22px;background:#f5f5f5;border:1px solid #dcdcdc;box-sizing:border-box;"></div>
<div class="b" style="left:1655px;top:753px;width:219px;height:20px;border:1px solid #ececec;box-sizing:border-box;"></div>
<div class="t" style="top:755.0px;height:17px;line-height:17px;font-size:13px;color:#6e6e6e;right:51.00px;">120.815,50</div>
<div class="t" style="top:754.5px;height:17px;line-height:17px;font-size:13px;color:#505050;font-weight:bold;letter-spacing:0.017px;left:1880px;">EUR</div>
<div class="b" style="left:1541px;top:780px;width:371px;height:14px;background:#2b579a;"></div>
<div class="t" style="top:779.8px;height:15px;line-height:15px;font-size:11px;color:#fff;font-weight:bold;letter-spacing:0.361px;left:1630.5px;">Zahlungsziele / Leistungszeitraum</div>
<div class="t" style="top:805.0px;height:17px;line-height:17px;font-size:13px;color:#646464;letter-spacing:-0.082px;left:1733px;">Zahlungsziel</div>
<div class="b" style="left:1812px;top:802px;width:40px;height:22px;background:#fff;border:1px solid #6e6e6e;box-sizing:border-box;"></div>
<div class="t" style="top:805.0px;height:17px;line-height:17px;font-size:13px;color:#6e6e6e;left:1825.9px;">5</div>
<div class="b" style="left:1855px;top:803px;width:15px;height:10px;background:#f0f0f0;border:1px solid #c8c8c8;box-sizing:border-box;"></div>
<svg class="b" style="left:1859px;top:806px" width="7" height="4" viewBox="0 0 7 4"><path d="M0 4 L3.5 0 L7 4 Z" fill="#000"/></svg>
<div class="b" style="left:1855px;top:813px;width:15px;height:10px;background:#f0f0f0;border:1px solid #c8c8c8;box-sizing:border-box;"></div>
<svg class="b" style="left:1859px;top:817px" width="7" height="4" viewBox="0 0 7 4"><path d="M0 0 L3.5 4 L7 0 Z" fill="#000"/></svg>
<div class="t" style="top:804.0px;height:17px;line-height:17px;font-size:13px;color:#646464;letter-spacing:-0.056px;left:1881px;">T.</div>
<div class="b" style="left:1548px;top:831px;width:13px;height:13px;background:#fff;border:1px solid #333;box-sizing:border-box;"><svg width="11" height="11" viewBox="0 0 11 11" style="display:block"><path d="M1.5 5.5 L4.2 8.2 L9.6 2.4" fill="none" stroke="#222" stroke-width="1.3"/></svg></div>
<div class="t" style="top:829.8px;height:17px;line-height:17px;font-size:13px;color:#000;letter-spacing:-0.149px;left:1564.5px;">Zahlungsbedingungen drucken</div>
</body></html>
